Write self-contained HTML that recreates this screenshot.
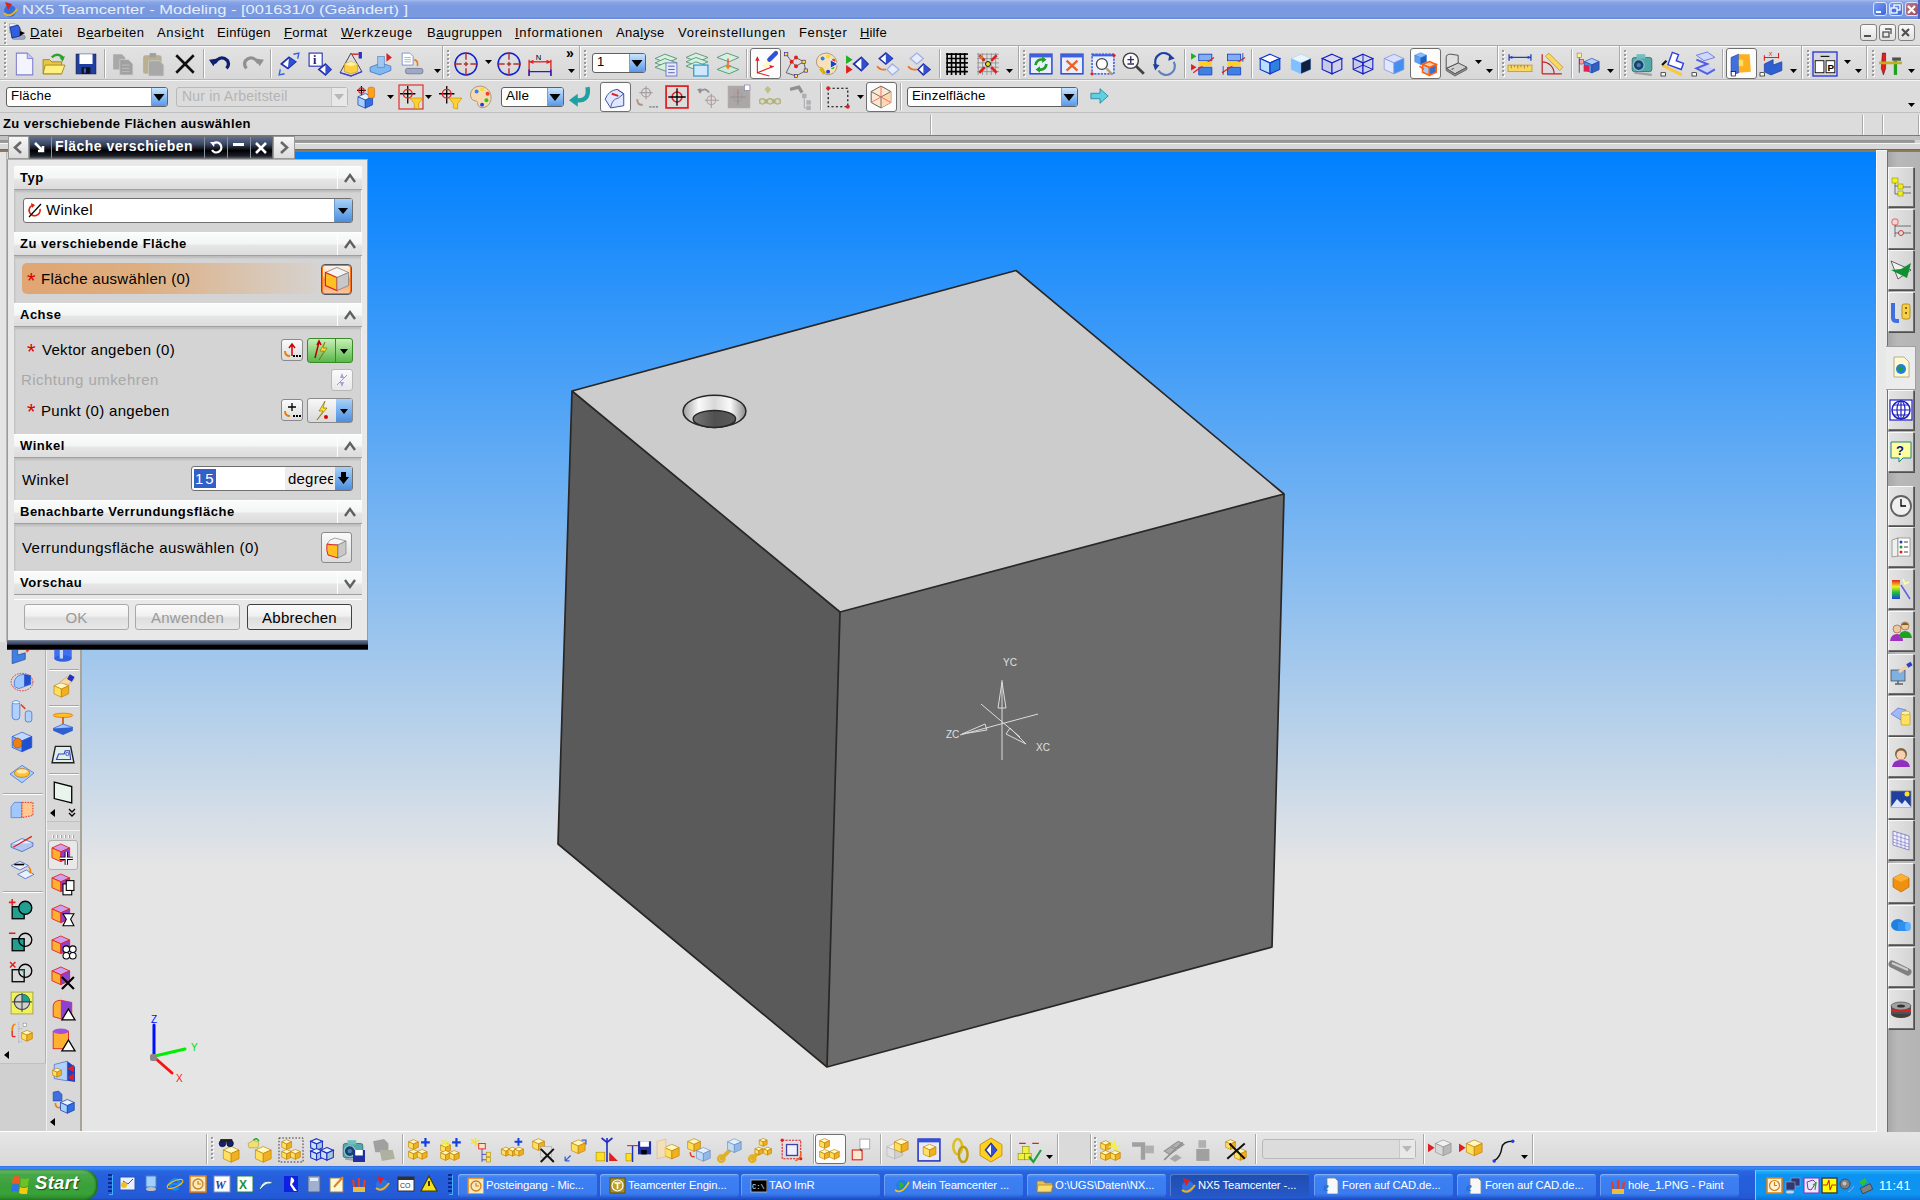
<!DOCTYPE html><html><head><meta charset="utf-8"><style>
*{box-sizing:border-box}
body{margin:0;width:1920px;height:1200px;position:relative;overflow:hidden;background:#dcdcdc;font-family:"Liberation Sans",sans-serif;font-size:13px;color:#000}
</style></head><body>
<div style="position:absolute;left:0px;top:0px;width:1920px;height:19px;background:linear-gradient(#a6bcee 0,#8aa6e6 2px,#7b9ae0 6px,#7898e0 14px,#7a9ce2 17px,#6a88d8 18px)"></div>
<div style="position:absolute;left:22px;top:2px;white-space:nowrap;font-size:13px;color:#e8eef8;transform:scaleX(1.27);transform-origin:0 0">NX5 Teamcenter - Modeling - [001631/0 (Geändert) ]</div>
<div style="position:absolute;left:0px;top:19px;width:1920px;height:27px;background:#dedede;border-top:1px solid #f4f2ea;border-bottom:1px solid #a8a8a8"></div>
<div style="position:absolute;left:30px;top:25px;white-space:nowrap;font-size:13px;color:#000;letter-spacing:0.53px"><u>D</u>atei</div>
<div style="position:absolute;left:77px;top:25px;white-space:nowrap;font-size:13px;color:#000;letter-spacing:0.46px">B<u>e</u>arbeiten</div>
<div style="position:absolute;left:157px;top:25px;white-space:nowrap;font-size:13px;color:#000;letter-spacing:0.69px">Ansi<u>c</u>ht</div>
<div style="position:absolute;left:217px;top:25px;white-space:nowrap;font-size:13px;color:#000;letter-spacing:0.31px">Einfügen</div>
<div style="position:absolute;left:284px;top:25px;white-space:nowrap;font-size:13px;color:#000;letter-spacing:0.41px"><u>F</u>ormat</div>
<div style="position:absolute;left:341px;top:25px;white-space:nowrap;font-size:13px;color:#000;letter-spacing:0.72px"><u>W</u>erkzeuge</div>
<div style="position:absolute;left:427px;top:25px;white-space:nowrap;font-size:13px;color:#000;letter-spacing:0.47px">B<u>a</u>ugruppen</div>
<div style="position:absolute;left:515px;top:25px;white-space:nowrap;font-size:13px;color:#000;letter-spacing:0.67px"><u>I</u>nformationen</div>
<div style="position:absolute;left:616px;top:25px;white-space:nowrap;font-size:13px;color:#000;letter-spacing:0.34px">Ana<u>l</u>yse</div>
<div style="position:absolute;left:678px;top:25px;white-space:nowrap;font-size:13px;color:#000;letter-spacing:0.74px">Voreinstellungen</div>
<div style="position:absolute;left:799px;top:25px;white-space:nowrap;font-size:13px;color:#000;letter-spacing:0.61px">Fens<u>t</u>er</div>
<div style="position:absolute;left:860px;top:25px;white-space:nowrap;font-size:13px;color:#000;letter-spacing:0.15px"><u>H</u>ilfe</div>
<div style="position:absolute;left:0px;top:46px;width:1920px;height:34px;background:linear-gradient(#e2e2e2,#d8d8d8);border-top:1px solid #fafafa;border-bottom:1px solid #b8b8b8"></div>
<div style="position:absolute;left:0px;top:80px;width:1920px;height:33px;background:#dcdcdc;border-top:1px solid #f4f4f4;border-bottom:1px solid #c0c0c0"></div>
<div style="position:absolute;left:0px;top:113px;width:1920px;height:22px;background:#dcdcdc"></div>
<div style="position:absolute;left:3px;top:116px;white-space:nowrap;font-size:13px;font-weight:bold;letter-spacing:0.43px">Zu verschiebende Flächen auswählen</div>
<div style="position:absolute;left:0px;top:135px;width:1920px;height:17px;background:linear-gradient(#7a7a7a 0,#7a7a7a 1px,#c2c2c2 1px,#c2c2c2 5px,#d4d4d4 5px,#d4d4d4 8px,#f4f4f4 8px,#f4f4f4 9px,#d8d8d8 9px,#d8d8d8 14px,#6a6a6a 14px,#6a6a6a 15px,#8a7a5a 15px,#8a7a5a 17px)"></div>
<div style="position:absolute;left:0px;top:140px;width:1915px;height:3px;background:linear-gradient(#909090,#a0a0a0);border-radius:0 2px 2px 0"></div>
<div style="position:absolute;left:82px;top:152px;width:1794px;height:979px;background:linear-gradient(#0080ff 0,#e5e5e5 716px,#e5e5e5 100%)"></div>
<div style="position:absolute;left:0px;top:152px;width:46px;height:979px;background:#d8d8d8;border-right:1px solid #b0b0b0"></div>
<div style="position:absolute;left:0px;top:152px;width:7px;height:490px;background:#e4e4e4;border-right:1px solid #b8b8b8"></div>
<div style="position:absolute;left:46px;top:152px;width:36px;height:979px;background:#d8d8d8;border-left:1px solid #f0f0f0;border-right:2px solid #a8a498"></div>
<div style="position:absolute;left:1876px;top:152px;width:10px;height:979px;background:#ebebeb;border-left:1px solid #c8c8c8"></div>
<div style="position:absolute;left:1886px;top:152px;width:34px;height:979px;background:#b4b4b4"></div>
<div style="position:absolute;left:0px;top:1131px;width:1920px;height:35px;background:linear-gradient(#e6e6e6,#d8d8d8);border-top:1px solid #fff"></div>
<div style="position:absolute;left:0px;top:1166px;width:1920px;height:34px;background:linear-gradient(#2a5ed8 0,#3c8cf4 1px,#3580f0 3px,#2a66e0 5px,#265fdc 10px,#245cda 26px,#2458d4 32px,#1c48b8 34px)"></div>
<div style="position:absolute;left:0px;top:1170px;width:98px;height:30px;background:linear-gradient(#6ab86a 0,#48a848 15%,#3aa03a 50%,#38a238 80%,#2a802a 100%);border-radius:0 14px 14px 0;box-shadow:inset -2px 0 2px #1e6a1e"></div>
<svg style="position:absolute;left:10px;top:1175px;" width="20" height="19" viewBox="0 0 20 19"><path d="M3 2 Q6 0 10 2 L9 9 Q6 7 2 9z" fill="#f05a20"/><path d="M11 3 Q15 5 19 3 L18 11 Q14 13 10 11z" fill="#70c020"/><path d="M2 10 Q5 8 9 10 L8 17 Q5 15 1 17z" fill="#3070f0"/><path d="M10 12 Q14 14 18 12 L17 19 Q13 20 9 18z" fill="#f8c810"/></svg>
<div style="position:absolute;left:35px;top:1172px;white-space:nowrap;font-size:18.5px;color:#fff;text-shadow:1px 1px 1px #1a4a1a;letter-spacing:0.3px"><i><b>Start</b></i></div>
<div style="position:absolute;left:5px;top:23px;width:2px;height:22px;background:repeating-linear-gradient(#fff 0,#fff 2px,transparent 2px,transparent 4px)"></div>
<div style="position:absolute;left:4px;top:22px;width:2px;height:22px;background:repeating-linear-gradient(#9a9a9a 0,#9a9a9a 2px,transparent 2px,transparent 4px)"></div>
<svg style="position:absolute;left:8px;top:23px;overflow:visible" width="18" height="18" viewBox="1 1 22 22"><path d="M3 2 L10 2 L13 5 L13 13 L3 13z" fill="#fff" stroke="#6080c0" stroke-width="0.7"/><path d="M5 6 H11 M5 8 H11 M5 10 H11" stroke="#8090b0" stroke-width="0.6"/><rect x="6" y="16" width="16" height="5" rx="2" fill="#a0a8c8" stroke="#606880" stroke-width="0.6"/><path d="M14 8 Q18 9 17 14" stroke="#e08020" stroke-width="1.5" fill="none"/></svg>
<svg style="position:absolute;left:8px;top:23px;" width="18" height="18" viewBox="0 0 18 18"><path d="M2 4 L10 2 L12 5 L12 13 L4 15z" fill="#3060e0" stroke="#102080" stroke-width="0.8"/><path d="M12 8 L17 10 L12 13z" fill="#000"/></svg>
<div style="position:absolute;left:1860px;top:24px;width:17px;height:17px;background:linear-gradient(#fafafa,#e0e0e0);border:1px solid #808080;border-radius:3px"></div>
<div style="position:absolute;left:1879px;top:24px;width:17px;height:17px;background:linear-gradient(#fafafa,#e0e0e0);border:1px solid #808080;border-radius:3px"></div>
<div style="position:absolute;left:1898px;top:24px;width:17px;height:17px;background:linear-gradient(#fafafa,#e0e0e0);border:1px solid #808080;border-radius:3px"></div>
<svg style="position:absolute;left:1860px;top:24px;" width="55" height="18" viewBox="0 0 55 18"><path d="M4 12 H11" stroke="#505050" stroke-width="2"/><path d="M25 5 H31 V10" stroke="#505050" stroke-width="1.3" fill="none"/><rect x="23" y="8" width="6" height="5" fill="none" stroke="#505050" stroke-width="1.3"/><path d="M42 5 L49 12 M49 5 L42 12" stroke="#505050" stroke-width="2.2"/></svg>
<svg style="position:absolute;left:2px;top:1px;" width="17" height="17" viewBox="0 0 17 17"><circle cx="8" cy="10" r="6" fill="#3070e0"/><path d="M2 12 Q8 18 15 8" stroke="#f0b020" stroke-width="2" fill="none"/><path d="M3 1 L10 3 L6 9z" fill="#e02020"/></svg>
<div style="position:absolute;left:1873px;top:2px;width:14px;height:14px;background:linear-gradient(135deg,#7a9cf0,#3a66e0);border:1px solid #d8e4fc;border-radius:3px"></div>
<div style="position:absolute;left:1889px;top:2px;width:14px;height:14px;background:linear-gradient(135deg,#7a9cf0,#3a66e0);border:1px solid #d8e4fc;border-radius:3px"></div>
<div style="position:absolute;left:1905px;top:2px;width:14px;height:14px;background:linear-gradient(135deg,#c07888,#985060);border:1px solid #d8e4fc;border-radius:3px"></div>
<svg style="position:absolute;left:1873px;top:2px;" width="48" height="14" viewBox="0 0 48 14"><rect x="3" y="9" width="5" height="2" fill="#fff"/><rect x="21" y="3" width="6" height="5" fill="none" stroke="#fff" stroke-width="1.3"/><rect x="18" y="6" width="6" height="5" fill="#4a70e0" stroke="#fff" stroke-width="1.3"/><path d="M35 4 L42 11 M42 4 L35 11" stroke="#fff" stroke-width="2.2"/></svg>
<div style="position:absolute;left:1918px;top:0px;width:2px;height:19px;background:#5060c8"></div>
<div style="position:absolute;left:5px;top:51px;width:2px;height:26px;background:repeating-linear-gradient(#fff 0,#fff 2px,transparent 2px,transparent 4px)"></div>
<div style="position:absolute;left:4px;top:50px;width:2px;height:26px;background:repeating-linear-gradient(#9a9a9a 0,#9a9a9a 2px,transparent 2px,transparent 4px)"></div>
<svg style="position:absolute;left:12px;top:52px;overflow:visible" width="24" height="24" viewBox="1 1 22 22"><path d="M5 2 L15 2 L20 7 L20 22 L5 22z" fill="#f4f4ff" stroke="#8080d0" stroke-width="1"/><path d="M15 2 L15 7 L20 7" fill="#c8c8f0" stroke="#8080d0" stroke-width="0.8"/></svg>
<svg style="position:absolute;left:42px;top:52px;overflow:visible" width="24" height="24" viewBox="1 1 22 22"><path d="M2 8 L8 8 L10 10 L19 10 L19 21 L2 21z" fill="#e8c840" stroke="#a08020" stroke-width="0.8"/><path d="M4 13 L22 13 L19 21 L2 21z" fill="#fff080" stroke="#a08020" stroke-width="0.8"/><path d="M10 6 Q15 1 20 6" stroke="#30a030" stroke-width="2.2" fill="none"/><path d="M17 6 L22 5 L20 10z" fill="#30a030"/></svg>
<svg style="position:absolute;left:74px;top:52px;overflow:visible" width="24" height="24" viewBox="1 1 22 22"><rect x="3" y="3" width="18" height="18" fill="#2040a0" stroke="#102060" stroke-width="0.8"/><rect x="6" y="3" width="12" height="9" fill="#fff"/><rect x="8" y="15" width="8" height="6" fill="#101020"/><rect x="10" y="16" width="2" height="4" fill="#4060c0"/></svg>
<div style="position:absolute;left:104px;top:49px;width:2px;height:29px;border-left:1px solid #a8a8a8;border-right:1px solid #fff"></div>
<svg style="position:absolute;left:111px;top:52px;overflow:visible" width="24" height="24" viewBox="1 1 22 22"><path d="M3 3 L11 3 L14 6 L14 17 L3 17z" fill="#a8a8a8"/><path d="M9 8 L17 8 L21 12 L21 22 L9 22z" fill="#a0a0a0" stroke="#d0d0d0" stroke-width="0.6"/><path d="M11 13 H18 M11 16 H18 M11 19 H18" stroke="#c0c0c0" stroke-width="0.8"/></svg>
<svg style="position:absolute;left:142px;top:52px;overflow:visible" width="24" height="24" viewBox="1 1 22 22"><rect x="2" y="4" width="17" height="17" rx="2" fill="#b8b090"/><rect x="8" y="2" width="6" height="4" fill="#a0a0a0"/><path d="M7 9 L17 9 L21 13 L21 23 L7 23z" fill="#a8a8a8" stroke="#d0d0d0" stroke-width="0.6"/></svg>
<svg style="position:absolute;left:173px;top:52px;overflow:visible" width="24" height="24" viewBox="1 1 22 22"><path d="M4 4 L20 20 M20 4 L4 20" stroke="#101010" stroke-width="2.4"/></svg>
<div style="position:absolute;left:203px;top:49px;width:2px;height:29px;border-left:1px solid #a8a8a8;border-right:1px solid #fff"></div>
<svg style="position:absolute;left:209px;top:52px;overflow:visible" width="24" height="24" viewBox="1 1 22 22"><path d="M6 11 Q12 3 18 9 Q20 13 17 16" stroke="#102070" stroke-width="3" fill="none"/><path d="M1 8 L9 7 L5 14z" fill="#102070"/></svg>
<svg style="position:absolute;left:240px;top:52px;overflow:visible" width="24" height="24" viewBox="1 1 22 22"><path d="M18 11 Q12 3 6 9 Q4 13 7 16" stroke="#909090" stroke-width="3" fill="none"/><path d="M23 8 L15 7 L19 14z" fill="#909090"/></svg>
<div style="position:absolute;left:270px;top:49px;width:2px;height:29px;border-left:1px solid #a8a8a8;border-right:1px solid #fff"></div>
<svg style="position:absolute;left:277px;top:52px;overflow:visible" width="24" height="24" viewBox="1 1 22 22"><path d="M5 12 L12 6 L18 10 L11 16z" fill="#fff" stroke="#2030b0" stroke-width="1.6"/><path d="M12 6 L18 10 L11 16z" fill="#3050d0"/><path d="M16 3 L21 2 L20 7 M4 17 L3 22 L8 21" stroke="#3060e0" stroke-width="1.3" fill="none"/></svg>
<svg style="position:absolute;left:308px;top:52px;overflow:visible" width="24" height="24" viewBox="1 1 22 22"><rect x="2" y="2" width="12" height="12" fill="#fff" stroke="#2030b0" stroke-width="1"/><text x="5.5" y="12" font-size="11" font-weight="bold" font-family="Liberation Serif" fill="#102080">i</text><path d="M11 17 L17 12 L22 17 L17 22z" fill="#fff" stroke="#2030b0" stroke-width="1.5"/><path d="M17 12 L22 17 L17 22z" fill="#3050d0"/></svg>
<svg style="position:absolute;left:339px;top:52px;overflow:visible" width="24" height="24" viewBox="1 1 22 22"><path d="M12 2 L2 20 L12 23 L22 19z" fill="none" stroke="#303030" stroke-width="0.8"/><path d="M6 12 L12 10 L18 12 L18 19 L12 21 L6 19z" fill="#ffd040" stroke="#c09020" stroke-width="0.6"/><path d="M6 12 L12 14 L18 12 L12 10z" fill="#fff0a0"/><path d="M2 20 L12 23 L22 19" stroke="#4040e0" stroke-width="1.2" fill="none"/><path d="M13 3 H19" stroke="#e02020" stroke-width="1.3"/><rect x="19" y="1" width="3" height="6" fill="#3030c0"/></svg>
<svg style="position:absolute;left:369px;top:52px;overflow:visible" width="24" height="24" viewBox="1 1 22 22"><path d="M2 15 L12 11 L21 14 L21 18 L11 22 L2 19z" fill="#80b8f0" stroke="#3060c0" stroke-width="0.6"/><rect x="9" y="5" width="6" height="10" fill="#a0c8f0" stroke="#5080c0" stroke-width="0.6"/><path d="M17 2 L22 6 L17 10z" fill="#e02020"/></svg>
<svg style="position:absolute;left:400px;top:52px;overflow:visible" width="24" height="24" viewBox="1 1 22 22"><path d="M3 2 L10 2 L13 5 L13 13 L3 13z" fill="#fff" stroke="#6080c0" stroke-width="0.7"/><path d="M5 6 H11 M5 8 H11 M5 10 H11" stroke="#8090b0" stroke-width="0.6"/><rect x="6" y="16" width="16" height="5" rx="2" fill="#a0a8c8" stroke="#606880" stroke-width="0.6"/><path d="M14 8 Q18 9 17 14" stroke="#e08020" stroke-width="1.5" fill="none"/></svg>
<svg style="position:absolute;left:434px;top:69px;" width="7" height="4" viewBox="0 0 7 4"><path d="M0 0 H7 L3.5 4z" fill="#000"/></svg>
<div style="position:absolute;left:442px;top:46px;width:2px;height:33px;border-left:1px solid #a8a8a8;border-right:1px solid #fff"></div>
<div style="position:absolute;left:448px;top:51px;width:2px;height:26px;background:repeating-linear-gradient(#fff 0,#fff 2px,transparent 2px,transparent 4px)"></div>
<div style="position:absolute;left:447px;top:50px;width:2px;height:26px;background:repeating-linear-gradient(#9a9a9a 0,#9a9a9a 2px,transparent 2px,transparent 4px)"></div>
<svg style="position:absolute;left:454px;top:52px;overflow:visible" width="24" height="24" viewBox="1 1 22 22"><circle cx="12" cy="12" r="10" fill="none" stroke="#1020d0" stroke-width="1.4"/><path d="M12 1 V8 M12 10 V14 M12 16 V23 M1 12 H8 M10 12 H14 M16 12 H23" stroke="#b03030" stroke-width="1.3"/></svg>
<svg style="position:absolute;left:485px;top:60px;" width="7" height="4" viewBox="0 0 7 4"><path d="M0 0 H7 L3.5 4z" fill="#000"/></svg>
<svg style="position:absolute;left:497px;top:52px;overflow:visible" width="24" height="24" viewBox="1 1 22 22"><circle cx="12" cy="12" r="10" fill="none" stroke="#1020d0" stroke-width="1.4"/><path d="M12 1 V8 M12 10 V14 M12 16 V23 M1 12 H8 M10 12 H14 M16 12 H23" stroke="#b03030" stroke-width="1.3"/></svg>
<svg style="position:absolute;left:528px;top:52px;overflow:visible" width="24" height="24" viewBox="1 1 22 22"><path d="M2 8 V23 M22 8 V23" stroke="#e02020" stroke-width="1.2"/><path d="M2 10 H22" stroke="#e02020" stroke-width="1.2"/><path d="M2 10 L6 8 L6 12z M22 10 L18 8 L18 12z" fill="#e02020"/><path d="M2 19 H22 M2 17 V23 M22 17 V23" stroke="#2020d0" stroke-width="1.3"/><text x="8" y="8" font-size="7" font-family="Liberation Sans" fill="#000">N</text></svg>
<div style="position:absolute;left:566px;top:45px;white-space:nowrap;font-size:14px;font-weight:bold">»</div>
<svg style="position:absolute;left:568px;top:69px;" width="7" height="4" viewBox="0 0 7 4"><path d="M0 0 H7 L3.5 4z" fill="#000"/></svg>
<div style="position:absolute;left:579px;top:46px;width:2px;height:33px;border-left:1px solid #a8a8a8;border-right:1px solid #fff"></div>
<div style="position:absolute;left:585px;top:51px;width:2px;height:26px;background:repeating-linear-gradient(#fff 0,#fff 2px,transparent 2px,transparent 4px)"></div>
<div style="position:absolute;left:584px;top:50px;width:2px;height:26px;background:repeating-linear-gradient(#9a9a9a 0,#9a9a9a 2px,transparent 2px,transparent 4px)"></div>
<div style="position:absolute;left:592px;top:53px;width:54px;height:20px;background:#fff;border:1px solid #606060;border-radius:3px"></div>
<div style="position:absolute;left:629px;top:54px;width:16px;height:18px;background:linear-gradient(#c8e4ff,#5898e8);border-left:1px solid #7aa0d0;border-radius:0 2px 2px 0"></div>
<svg style="position:absolute;left:629px;top:54px;" width="16" height="18" viewBox="0 0 16 18"><path d="M2.5 6.0 H13.5 L8 13.0z" fill="#000"/></svg>
<div style="position:absolute;left:597px;top:54px;white-space:nowrap;font-size:13px;color:#000;letter-spacing:0.15px">1</div>
<svg style="position:absolute;left:654px;top:52px;overflow:visible" width="24" height="24" viewBox="1 1 22 22"><path d="M2 7 L11 3 L22 7 L13 11z" fill="#d8f0e0" stroke="#509070" stroke-width="0.8"/><path d="M2 11 L11 7 L22 11 L13 15z" fill="#d8f0e0" stroke="#509070" stroke-width="0.8"/><path d="M2 15 L11 11 L22 15 L13 19z" fill="#d8f0e0" stroke="#509070" stroke-width="0.8"/><rect x="12" y="11" width="10" height="12" fill="#e8eaff" stroke="#6070c0" stroke-width="0.8"/><path d="M14 14 H20 M14 17 H20 M14 20 H20" stroke="#4050b0" stroke-width="0.8"/></svg>
<svg style="position:absolute;left:685px;top:52px;overflow:visible" width="24" height="24" viewBox="1 1 22 22"><path d="M2 6 L11 2 L22 6 L13 10z" fill="#d8f0e0" stroke="#509070" stroke-width="0.8"/><path d="M2 10 L11 6 L22 10 L13 14z" fill="#d8f0e0" stroke="#509070" stroke-width="0.8"/><path d="M2 14 L11 10 L22 14 L13 18z" fill="#d8f0e0" stroke="#509070" stroke-width="0.8"/><rect x="9" y="13" width="13" height="10" fill="#d0e8ff" stroke="#30a0d0" stroke-width="1.2"/></svg>
<svg style="position:absolute;left:716px;top:52px;overflow:visible" width="24" height="24" viewBox="1 1 22 22"><path d="M2 6 L11 2 L22 6 L13 10z" fill="#d8f0e0" stroke="#509070" stroke-width="0.8"/><path d="M2 17 L11 13 L22 17 L13 21z" fill="#c8ecd8" stroke="#509070" stroke-width="0.8"/><path d="M12 7 V15" stroke="#e06020" stroke-width="1.4"/><path d="M9 13 L12 17 L15 13z" fill="#f08020"/></svg>
<div style="position:absolute;left:746px;top:49px;width:2px;height:29px;border-left:1px solid #a8a8a8;border-right:1px solid #fff"></div>
<div style="position:absolute;left:750px;top:48px;width:31px;height:31px;background:#fcfcfc;border:1px solid #707070;border-radius:3px"></div>
<svg style="position:absolute;left:753px;top:52px;overflow:visible" width="24" height="24" viewBox="1 1 22 22"><path d="M5 6 V20 L20 14 M5 20 L16 23" stroke="#e02020" stroke-width="1" fill="none"/><path d="M5 5 L3 9 H7z M20 14 L16 13 L17 16z" fill="#e02020"/><path d="M11 15 L19 6" stroke="#fffbc0" stroke-width="4"/><path d="M16 8 L22 2" stroke="#3050e0" stroke-width="4" stroke-linecap="round"/></svg>
<svg style="position:absolute;left:784px;top:52px;overflow:visible" width="24" height="24" viewBox="1 1 22 22"><path d="M3 3 L8 10 L3 20 L12 23 L21 18 L19 10 L12 6 L8 10 L12 14 L19 10" stroke="#404040" stroke-width="0.7" fill="none"/><rect x="1.5" y="1.5" width="3" height="3" fill="#ffe020" stroke="#4020a0" stroke-width="0.6"/><rect x="19.5" y="16.5" width="3" height="3" fill="#ffe020" stroke="#4020a0" stroke-width="0.6"/><rect x="10.5" y="21.5" width="3" height="3" fill="#ffe020" stroke="#4020a0" stroke-width="0.6"/><rect x="17.5" y="8.5" width="3" height="3" fill="#ffe020" stroke="#4020a0" stroke-width="0.6"/><circle cx="8" cy="10" r="1.8" fill="#e02020"/><circle cx="12" cy="14" r="1.8" fill="#e02020"/><circle cx="12" cy="6" r="1.8" fill="#e02020"/></svg>
<svg style="position:absolute;left:815px;top:52px;overflow:visible" width="24" height="24" viewBox="1 1 22 22"><path d="M12 2 C4 2 1 8 3 13 C5 17 9 14 9 18 C9 22 14 23 18 20 C23 16 23 4 12 2z" fill="#f8e0b8" stroke="#a08060" stroke-width="0.7"/><circle cx="8" cy="7" r="1.8" fill="#3080f0"/><circle cx="13" cy="5" r="1.8" fill="#f0e020"/><circle cx="18" cy="9" r="1.8" fill="#f04020"/><circle cx="17" cy="15" r="1.8" fill="#30c030"/><circle cx="13" cy="19" r="1.8" fill="#2040e0"/><path d="M15 8 L22 12 L15 16z" fill="#2040c0" stroke="#fff" stroke-width="0.8"/><path d="M6 16 L10 21" stroke="#e0b000" stroke-width="3"/></svg>
<svg style="position:absolute;left:845px;top:52px;overflow:visible" width="24" height="24" viewBox="1 1 22 22"><path d="M2 4 L8 8 L2 12z" fill="#20b020"/><path d="M2 13 L8 17 L2 21z" fill="#e02020"/><path d="M9 12 L16 6 L22 12 L16 18z" fill="#fff" stroke="#2030b0" stroke-width="1.6"/><path d="M16 6 L22 12 L16 18z" fill="#3050d0"/></svg>
<svg style="position:absolute;left:876px;top:52px;overflow:visible" width="24" height="24" viewBox="1 1 22 22"><path d="M4 7 L10 2 L16 7 L10 12z" fill="#fff" stroke="#2030b0" stroke-width="1.4"/><path d="M10 2 L16 7 L10 12z" fill="#3050d0"/><path d="M11 17 L16 12 L22 17 L16 22z" fill="#e8ecff" stroke="#a0b0e0" stroke-width="1.2"/><path d="M2 14 Q5 18 10 17" stroke="#f07020" stroke-width="1.6" fill="none"/></svg>
<svg style="position:absolute;left:907px;top:52px;overflow:visible" width="24" height="24" viewBox="1 1 22 22"><path d="M4 7 L10 2 L16 7 L10 12z" fill="#e8ecff" stroke="#a0b0e0" stroke-width="1.2"/><path d="M11 17 L16 12 L22 17 L16 22z" fill="#fff" stroke="#2030b0" stroke-width="1.4"/><path d="M16 12 L22 17 L16 22z" fill="#3050d0"/><path d="M2 14 Q5 18 10 17" stroke="#f07020" stroke-width="1.6" fill="none"/></svg>
<div style="position:absolute;left:939px;top:49px;width:2px;height:29px;border-left:1px solid #a8a8a8;border-right:1px solid #fff"></div>
<svg style="position:absolute;left:945px;top:52px;overflow:visible" width="24" height="24" viewBox="1 1 22 22"><path d="M3 2 V22 M7 2 V22 M11 2 V22 M15 2 V22 M19 2 V22 M2 3 H22 M2 7 H22 M2 11 H22 M2 15 H22 M2 19 H22 " stroke="#000" stroke-width="1.5"/></svg>
<svg style="position:absolute;left:976px;top:52px;overflow:visible" width="24" height="24" viewBox="1 1 22 22"><path d="M3 2 V22 M7 2 V22 M11 2 V22 M15 2 V22 M19 2 V22 M2 3 H22 M2 7 H22 M2 11 H22 M2 15 H22 M2 19 H22 " stroke="#909090" stroke-width="0.8"/><path d="M4 4 L9 9 M20 4 L15 9 M4 20 L9 15 M20 20 L15 15" stroke="#e02020" stroke-width="2.4"/><path d="M4 4 L8 6 L6 8z" fill="#f08020"/><circle cx="12" cy="12" r="2.3" fill="#e0e020" stroke="#000" stroke-width="0.8"/></svg>
<svg style="position:absolute;left:1006px;top:69px;" width="7" height="4" viewBox="0 0 7 4"><path d="M0 0 H7 L3.5 4z" fill="#000"/></svg>
<div style="position:absolute;left:1018px;top:46px;width:2px;height:33px;border-left:1px solid #a8a8a8;border-right:1px solid #fff"></div>
<div style="position:absolute;left:1024px;top:51px;width:2px;height:26px;background:repeating-linear-gradient(#fff 0,#fff 2px,transparent 2px,transparent 4px)"></div>
<div style="position:absolute;left:1023px;top:50px;width:2px;height:26px;background:repeating-linear-gradient(#9a9a9a 0,#9a9a9a 2px,transparent 2px,transparent 4px)"></div>
<svg style="position:absolute;left:1029px;top:52px;overflow:visible" width="24" height="24" viewBox="1 1 22 22"><rect x="2" y="3" width="20" height="18" fill="#e8f0ff" stroke="#2040d0" stroke-width="1.3"/><rect x="2" y="3" width="20" height="3" fill="#4060e0"/><path d="M7 13 Q8 7 14 8" stroke="#20a020" stroke-width="2.4" fill="none"/><path d="M17 12 Q16 18 10 17" stroke="#20a020" stroke-width="2.4" fill="none"/><path d="M13 5 L17 8 L13 11z M11 14 L7 17 L11 20z" fill="#20a020"/></svg>
<svg style="position:absolute;left:1060px;top:52px;overflow:visible" width="24" height="24" viewBox="1 1 22 22"><rect x="2" y="3" width="20" height="18" fill="#e8f0ff" stroke="#2040d0" stroke-width="1.3"/><rect x="2" y="3" width="20" height="3" fill="#4060e0"/><path d="M7 9 L17 18 M17 9 L7 18" stroke="#f06020" stroke-width="2.2"/></svg>
<svg style="position:absolute;left:1091px;top:52px;overflow:visible" width="24" height="24" viewBox="1 1 22 22"><rect x="2" y="3" width="20" height="18" fill="#e8f0ff" stroke="#2040d0" stroke-width="1.2" stroke-dasharray="2,1"/><rect x="2" y="3" width="20" height="2" fill="#4060e0"/><circle cx="11" cy="12" r="5" fill="#fff" stroke="#404040" stroke-width="1.2"/><path d="M15 16 L20 21" stroke="#c0a060" stroke-width="2.2"/><circle cx="22" cy="4" r="1.5" fill="#e02020"/><circle cx="2" cy="21" r="1.5" fill="#e02020"/></svg>
<svg style="position:absolute;left:1122px;top:52px;overflow:visible" width="24" height="24" viewBox="1 1 22 22"><circle cx="9" cy="9" r="7" fill="#fafafa" stroke="#404040" stroke-width="1.3"/><path d="M9 5 V11 M6 8 H12 M6 12 H12" stroke="#303060" stroke-width="1.3"/><path d="M14 14 L21 21" stroke="#404040" stroke-width="2.5"/></svg>
<svg style="position:absolute;left:1153px;top:52px;overflow:visible" width="24" height="24" viewBox="1 1 22 22"><path d="M4 14 A8 8 0 0 1 18 6" stroke="#2040a0" stroke-width="2" fill="none"/><path d="M20 10 A8 8 0 0 1 6 18" stroke="#6080c0" stroke-width="2" fill="none"/><path d="M16 3 L21 7 L15 9z M1 12 L7 13 L3 18z" fill="#2040a0"/></svg>
<div style="position:absolute;left:1184px;top:49px;width:2px;height:29px;border-left:1px solid #a8a8a8;border-right:1px solid #fff"></div>
<svg style="position:absolute;left:1190px;top:52px;overflow:visible" width="24" height="24" viewBox="1 1 22 22"><path d="M2 2 L7 5 L2 8z" fill="#20b020"/><path d="M2 12 L7 15 L2 18z" fill="#e02020"/><rect x="9" y="3" width="12" height="6" fill="#80b0f0" stroke="#2040c0" stroke-width="0.8"/><path d="M9 15 L21 15 L21 22 L9 22z" fill="#4080e0" stroke="#2040c0" stroke-width="0.8"/><path d="M4 20 L23 6" stroke="#e02020" stroke-width="1.2"/><rect x="9" y="10" width="12" height="4" fill="#ffd020"/></svg>
<svg style="position:absolute;left:1221px;top:52px;overflow:visible" width="24" height="24" viewBox="1 1 22 22"><rect x="7" y="3" width="12" height="6" fill="#80b0f0" stroke="#2040c0" stroke-width="0.8"/><path d="M7 15 L19 15 L19 22 L7 22z" fill="#4080e0" stroke="#2040c0" stroke-width="0.8"/><path d="M2 20 L23 6" stroke="#e02020" stroke-width="1.2"/><rect x="7" y="10" width="12" height="4" fill="#ffd020"/><path d="M3 14 V22 M21 2 V10" stroke="#2040c0" stroke-width="0.8"/></svg>
<div style="position:absolute;left:1251px;top:49px;width:2px;height:29px;border-left:1px solid #a8a8a8;border-right:1px solid #fff"></div>
<svg style="position:absolute;left:1258px;top:52px;overflow:visible" width="24" height="24" viewBox="1 1 22 22"><polygon points="12.0,3.0 21.0,7.0 12.0,11.0 3.0,7.0" fill="#ffffff" stroke="#1030d0" stroke-width="1.0"/><polygon points="3.0,7.0 12.0,11.0 12.0,21.0 3.0,17.0" fill="#b8e0ff" stroke="#1030d0" stroke-width="1.0"/><polygon points="12.0,11.0 21.0,7.0 21.0,17.0 12.0,21.0" fill="#3080e0" stroke="#1030d0" stroke-width="1.0"/></svg>
<svg style="position:absolute;left:1289px;top:52px;overflow:visible" width="24" height="24" viewBox="1 1 22 22"><polygon points="12.0,3.0 21.0,7.0 12.0,11.0 3.0,7.0" fill="#e8f4ff" stroke="#80c0ff" stroke-width="0.3"/><polygon points="3.0,7.0 12.0,11.0 12.0,21.0 3.0,17.0" fill="#80c0ff" stroke="#80c0ff" stroke-width="0.3"/><polygon points="12.0,11.0 21.0,7.0 21.0,17.0 12.0,21.0" fill="#102040" stroke="#80c0ff" stroke-width="0.3"/></svg>
<svg style="position:absolute;left:1320px;top:52px;overflow:visible" width="24" height="24" viewBox="1 1 22 22"><polygon points="12.0,3.0 21.0,7.0 12.0,11.0 3.0,7.0" fill="#d8d8f0" stroke="#1020c0" stroke-width="1.0"/><polygon points="3.0,7.0 12.0,11.0 12.0,21.0 3.0,17.0" fill="#c8c8e8" stroke="#1020c0" stroke-width="1.0"/><polygon points="12.0,11.0 21.0,7.0 21.0,17.0 12.0,21.0" fill="#d0d0ec" stroke="#1020c0" stroke-width="1.0"/></svg>
<svg style="position:absolute;left:1351px;top:52px;overflow:visible" width="24" height="24" viewBox="1 1 22 22"><polygon points="12.0,3.0 21.0,7.0 12.0,11.0 3.0,7.0" fill="#d8d8f0" stroke="#1020c0" stroke-width="1.0"/><polygon points="3.0,7.0 12.0,11.0 12.0,21.0 3.0,17.0" fill="#c8c8e8" stroke="#1020c0" stroke-width="1.0"/><polygon points="12.0,11.0 21.0,7.0 21.0,17.0 12.0,21.0" fill="#d0d0ec" stroke="#1020c0" stroke-width="1.0"/><path d="M3 17 L12 13 L21 17 M12 3 V13" stroke="#1020c0" stroke-width="0.9" fill="none"/></svg>
<svg style="position:absolute;left:1382px;top:52px;overflow:visible" width="24" height="24" viewBox="1 1 22 22"><polygon points="12.0,3.0 21.0,7.0 12.0,11.0 3.0,7.0" fill="#d8e0ff" stroke="#8090e0" stroke-width="0.7"/><polygon points="3.0,7.0 12.0,11.0 12.0,21.0 3.0,17.0" fill="#e0e8ff" stroke="#8090e0" stroke-width="0.7"/><polygon points="12.0,11.0 21.0,7.0 21.0,17.0 12.0,21.0" fill="#4090f0" stroke="#8090e0" stroke-width="0.7"/></svg>
<div style="position:absolute;left:1410px;top:48px;width:31px;height:31px;background:#fcfcfc;border:1px solid #707070;border-radius:3px"></div>
<svg style="position:absolute;left:1413px;top:52px;overflow:visible" width="24" height="24" viewBox="1 1 22 22"><polygon points="8.0,1.6 13.4,4.0 8.0,6.4 2.6,4.0" fill="#80c0ff" stroke="#3070d0" stroke-width="0.4"/><polygon points="2.6,4.0 8.0,6.4 8.0,12.4 2.6,10.0" fill="#60a0f0" stroke="#3070d0" stroke-width="0.4"/><polygon points="8.0,6.4 13.4,4.0 13.4,10.0 8.0,12.4" fill="#2060c0" stroke="#3070d0" stroke-width="0.4"/><polygon points="16.0,9.7 22.3,12.5 16.0,15.3 9.7,12.5" fill="#ffd0a0" stroke="#ff6010" stroke-width="1.4"/><polygon points="9.7,12.5 16.0,15.3 16.0,22.3 9.7,19.5" fill="#a0d0ff" stroke="#ff6010" stroke-width="1.4"/><polygon points="16.0,15.3 22.3,12.5 22.3,19.5 16.0,22.3" fill="#3070e0" stroke="#ff6010" stroke-width="1.4"/><path d="M7 14 L11 17" stroke="#f06020" stroke-width="1.5"/></svg>
<svg style="position:absolute;left:1444px;top:52px;overflow:visible" width="24" height="24" viewBox="1 1 22 22"><path d="M3 16 L14 11 L22 15 L11 21z" fill="#d0d0d0" stroke="#505050" stroke-width="0.9"/><path d="M3 16 L3 18 L11 23 L22 17 L22 15 L11 21z" fill="#909090" stroke="#505050" stroke-width="0.7"/><path d="M3 16 L3 6 Q3 3 7 3 L14 4 L14 11z" fill="#e0e0e0" stroke="#505050" stroke-width="0.9"/><path d="M8 17 L10 16" stroke="#505050" stroke-width="1"/></svg>
<svg style="position:absolute;left:1475px;top:60px;" width="7" height="4" viewBox="0 0 7 4"><path d="M0 0 H7 L3.5 4z" fill="#000"/></svg>
<svg style="position:absolute;left:1486px;top:69px;" width="7" height="4" viewBox="0 0 7 4"><path d="M0 0 H7 L3.5 4z" fill="#000"/></svg>
<div style="position:absolute;left:1497px;top:46px;width:2px;height:33px;border-left:1px solid #a8a8a8;border-right:1px solid #fff"></div>
<div style="position:absolute;left:1503px;top:51px;width:2px;height:26px;background:repeating-linear-gradient(#fff 0,#fff 2px,transparent 2px,transparent 4px)"></div>
<div style="position:absolute;left:1502px;top:50px;width:2px;height:26px;background:repeating-linear-gradient(#9a9a9a 0,#9a9a9a 2px,transparent 2px,transparent 4px)"></div>
<svg style="position:absolute;left:1508px;top:52px;overflow:visible" width="24" height="24" viewBox="1 1 22 22"><path d="M2 6 H22 M2 3 V9 M22 3 V9" stroke="#2040c0" stroke-width="1.2"/><path d="M2 6 L5 4.5 L5 7.5z M22 6 L19 4.5 L19 7.5z" fill="#2040c0"/><rect x="1" y="13" width="22" height="6" fill="#f8d860" stroke="#c09020" stroke-width="0.7"/><path d="M4 13 V16 M7 13 V15 M10 13 V16 M13 13 V15 M16 13 V16 M19 13 V15" stroke="#806020" stroke-width="0.6"/></svg>
<svg style="position:absolute;left:1540px;top:52px;overflow:visible" width="24" height="24" viewBox="1 1 22 22"><path d="M3 21 L3 3 M3 21 L21 21 M3 10 A11 11 0 0 1 14 21" stroke="#c02020" stroke-width="1.1" fill="none"/><path d="M9 2 L22 15 L19 18 L6 5z" fill="#f8d860" stroke="#c09020" stroke-width="0.7"/></svg>
<div style="position:absolute;left:1571px;top:49px;width:2px;height:29px;border-left:1px solid #a8a8a8;border-right:1px solid #fff"></div>
<svg style="position:absolute;left:1576px;top:52px;overflow:visible" width="24" height="24" viewBox="1 1 22 22"><rect x="2" y="2" width="4" height="4" fill="#fff0a0" stroke="#808020" stroke-width="0.5"/><rect x="4" y="8" width="4" height="4" fill="#ffa0a0" stroke="#802020" stroke-width="0.5"/><path d="M4 6 V20" stroke="#4040a0" stroke-width="0.8"/><polygon points="15.5,6.8 22.2,9.8 15.5,12.8 8.8,9.8" fill="#b0d0ff" stroke="#2040a0" stroke-width="0.6"/><polygon points="8.8,9.8 15.5,12.8 15.5,20.2 8.8,17.2" fill="#5090e0" stroke="#2040a0" stroke-width="0.6"/><polygon points="15.5,12.8 22.2,9.8 22.2,17.2 15.5,20.2" fill="#3060c0" stroke="#2040a0" stroke-width="0.6"/><rect x="8" y="13" width="5" height="6" fill="#e02050"/></svg>
<svg style="position:absolute;left:1607px;top:69px;" width="7" height="4" viewBox="0 0 7 4"><path d="M0 0 H7 L3.5 4z" fill="#000"/></svg>
<div style="position:absolute;left:1619px;top:46px;width:2px;height:33px;border-left:1px solid #a8a8a8;border-right:1px solid #fff"></div>
<div style="position:absolute;left:1625px;top:51px;width:2px;height:26px;background:repeating-linear-gradient(#fff 0,#fff 2px,transparent 2px,transparent 4px)"></div>
<div style="position:absolute;left:1624px;top:50px;width:2px;height:26px;background:repeating-linear-gradient(#9a9a9a 0,#9a9a9a 2px,transparent 2px,transparent 4px)"></div>
<svg style="position:absolute;left:1630px;top:52px;overflow:visible" width="24" height="24" viewBox="1 1 22 22"><rect x="3" y="6" width="18" height="13" rx="2" fill="#50a8a8" stroke="#306060" stroke-width="0.7"/><rect x="7" y="3" width="8" height="4" fill="#70c0c0"/><circle cx="9" cy="13" r="5" fill="#204060" stroke="#80c0e0" stroke-width="1.2"/><circle cx="9" cy="13" r="2" fill="#4080c0"/><path d="M5 20 L21 22" stroke="#a0a0a0" stroke-width="2"/></svg>
<svg style="position:absolute;left:1661px;top:52px;overflow:visible" width="24" height="24" viewBox="1 1 22 22"><path d="M9 3 L15 3 L15 9 L22 9 L22 15 L9 15z" fill="#fff" stroke="#3040e0" stroke-width="1.3" transform="rotate(20 15 9)"/><path d="M2 13 L20 22" stroke="#f8c840" stroke-width="3"/><path d="M2 13 L6 9" stroke="#101010" stroke-width="2"/><rect x="1" y="20" width="4" height="3" fill="#fff" stroke="#000" stroke-width="0.6"/></svg>
<svg style="position:absolute;left:1692px;top:52px;overflow:visible" width="24" height="24" viewBox="1 1 22 22"><path d="M5 4 L15 1 L22 6 L12 9z" fill="#d0d8ff" stroke="#6070e0" stroke-width="0.8"/><path d="M5 8 L15 12 L5 16 L15 21 L22 17" stroke="#5060e0" stroke-width="1.8" fill="#c8d0ff"/><rect x="1" y="20" width="4" height="3" fill="#fff" stroke="#000" stroke-width="0.6"/></svg>
<div style="position:absolute;left:1722px;top:49px;width:2px;height:29px;border-left:1px solid #a8a8a8;border-right:1px solid #fff"></div>
<div style="position:absolute;left:1726px;top:48px;width:31px;height:31px;background:#fcfcfc;border:1px solid #707070;border-radius:3px"></div>
<svg style="position:absolute;left:1729px;top:52px;overflow:visible" width="24" height="24" viewBox="1 1 22 22"><path d="M3 6 L10 3 L10 20 L3 22z" fill="#4070e0" stroke="#2040a0" stroke-width="0.7"/><path d="M10 3 L20 3 L21 19 L10 20z" fill="#ffb020"/><path d="M10 8 L14 8 L14 14 L10 14z" fill="#ffe060"/><rect x="3" y="19" width="4" height="4" fill="#fff" stroke="#000" stroke-width="0.6"/></svg>
<svg style="position:absolute;left:1760px;top:52px;overflow:visible" width="24" height="24" viewBox="1 1 22 22"><path d="M5 12 L13 8 L13 13 L21 10 L21 18 L11 22 L5 19z" fill="#3060d0" stroke="#2040a0" stroke-width="0.7"/><path d="M5 4 V9 M18 2 V7 M5 6 H18" stroke="#e02020" stroke-width="1"/><text x="9" y="5" font-size="5" fill="#e02020">X</text><rect x="1" y="20" width="4" height="3" fill="#fff" stroke="#000" stroke-width="0.6"/></svg>
<svg style="position:absolute;left:1790px;top:69px;" width="7" height="4" viewBox="0 0 7 4"><path d="M0 0 H7 L3.5 4z" fill="#000"/></svg>
<div style="position:absolute;left:1801px;top:46px;width:2px;height:33px;border-left:1px solid #a8a8a8;border-right:1px solid #fff"></div>
<div style="position:absolute;left:1808px;top:51px;width:2px;height:26px;background:repeating-linear-gradient(#fff 0,#fff 2px,transparent 2px,transparent 4px)"></div>
<div style="position:absolute;left:1807px;top:50px;width:2px;height:26px;background:repeating-linear-gradient(#9a9a9a 0,#9a9a9a 2px,transparent 2px,transparent 4px)"></div>
<svg style="position:absolute;left:1813px;top:52px;overflow:visible" width="24" height="24" viewBox="1 1 22 22"><rect x="1" y="1" width="22" height="22" fill="#d8d8d8" stroke="#2030e0" stroke-width="1.2"/><rect x="3" y="9" width="8" height="11" fill="#fff" stroke="#000" stroke-width="0.8"/><rect x="13" y="9" width="8" height="11" fill="#fff" stroke="#000" stroke-width="0.8"/><text x="14.2" y="18.5" font-size="9" font-weight="bold" font-family="Liberation Sans">P</text><path d="M8 5 H16" stroke="#000" stroke-width="1"/></svg>
<svg style="position:absolute;left:1844px;top:60px;" width="7" height="4" viewBox="0 0 7 4"><path d="M0 0 H7 L3.5 4z" fill="#000"/></svg>
<svg style="position:absolute;left:1855px;top:69px;" width="7" height="4" viewBox="0 0 7 4"><path d="M0 0 H7 L3.5 4z" fill="#000"/></svg>
<div style="position:absolute;left:1866px;top:46px;width:2px;height:33px;border-left:1px solid #a8a8a8;border-right:1px solid #fff"></div>
<div style="position:absolute;left:1873px;top:51px;width:2px;height:26px;background:repeating-linear-gradient(#fff 0,#fff 2px,transparent 2px,transparent 4px)"></div>
<div style="position:absolute;left:1872px;top:50px;width:2px;height:26px;background:repeating-linear-gradient(#9a9a9a 0,#9a9a9a 2px,transparent 2px,transparent 4px)"></div>
<svg style="position:absolute;left:1878px;top:52px;overflow:visible" width="24" height="24" viewBox="1 1 22 22"><path d="M5 2 L8 2 L8 16 L6 22 L4 16z" fill="#e02020" stroke="#600000" stroke-width="0.5"/><path d="M14 6 L22 6 L22 9 L14 9z" fill="#505050"/><path d="M17 9 V22" stroke="#20a020" stroke-width="3"/><path d="M2 11 H23" stroke="#c0b020" stroke-width="2.5"/></svg>
<svg style="position:absolute;left:1908px;top:69px;" width="7" height="4" viewBox="0 0 7 4"><path d="M0 0 H7 L3.5 4z" fill="#000"/></svg>
<div style="position:absolute;left:6px;top:87px;width:162px;height:20px;background:#fff;border:1px solid #606060;border-radius:3px"></div>
<div style="position:absolute;left:151px;top:88px;width:16px;height:18px;background:linear-gradient(#c8e4ff,#5898e8);border-left:1px solid #7aa0d0;border-radius:0 2px 2px 0"></div>
<svg style="position:absolute;left:151px;top:88px;" width="16" height="18" viewBox="0 0 16 18"><path d="M2.5 6.0 H13.5 L8 13.0z" fill="#000"/></svg>
<div style="position:absolute;left:11px;top:88px;white-space:nowrap;font-size:13.2px;color:#000;letter-spacing:0.15px">Fläche</div>
<div style="position:absolute;left:176px;top:87px;width:172px;height:20px;background:#dcdcdc;border:1px solid #b8b8b8;border-radius:3px"></div>
<div style="position:absolute;left:331px;top:88px;width:16px;height:18px;background:#e8e8e8;border-left:1px solid #c8c8c8"></div>
<svg style="position:absolute;left:331px;top:88px;" width="16" height="18" viewBox="0 0 16 18"><path d="M3 6.0 H13 L8 12.0z" fill="#b8b8b8"/></svg>
<div style="position:absolute;left:182px;top:88px;white-space:nowrap;font-size:14px;color:#b4b4b4;letter-spacing:0.2px">Nur in Arbeitsteil</div>
<svg style="position:absolute;left:356px;top:85px;overflow:visible" width="24" height="24" viewBox="1 1 22 22"><polygon points="9.5,8.8 16.2,11.8 9.5,14.8 2.8,11.8" fill="#e8f4ff" stroke="#2040b0" stroke-width="0.7"/><polygon points="2.8,11.8 9.5,14.8 9.5,22.2 2.8,19.2" fill="#a8d0ff" stroke="#2040b0" stroke-width="0.7"/><polygon points="9.5,14.8 16.2,11.8 16.2,19.2 9.5,22.2" fill="#3070e0" stroke="#2040b0" stroke-width="0.7"/><rect x="12" y="3" width="6" height="10" rx="2" fill="#ffa020" stroke="#c06000" stroke-width="0.5"/><path d="M2 6 H10 M6 2 V10" stroke="#000" stroke-width="1.1"/><circle cx="6" cy="6" r="2.5" fill="none" stroke="#e02020" stroke-width="1"/></svg>
<svg style="position:absolute;left:387px;top:95px;" width="7" height="4" viewBox="0 0 7 4"><path d="M0 0 H7 L3.5 4z" fill="#000"/></svg>
<svg style="position:absolute;left:399px;top:85px;overflow:visible" width="24" height="24" viewBox="1 1 22 22"><rect x="1" y="1" width="22" height="22" fill="none" stroke="#e02020" stroke-width="1"/><path d="M2 9 H16 M9 2 V18" stroke="#000" stroke-width="1.2"/><circle cx="9" cy="9" r="4" fill="none" stroke="#e02020" stroke-width="1.3"/><path d="M11 13 L23 13 L19 18 L19 23 L15 22 L15 18z" fill="#ffd030" stroke="#c09000" stroke-width="0.6"/></svg>
<svg style="position:absolute;left:425px;top:95px;" width="7" height="4" viewBox="0 0 7 4"><path d="M0 0 H7 L3.5 4z" fill="#000"/></svg>
<svg style="position:absolute;left:438px;top:85px;overflow:visible" width="24" height="24" viewBox="1 1 22 22"><path d="M2 9 H16 M9 2 V18" stroke="#000" stroke-width="1.2"/><circle cx="9" cy="9" r="4" fill="none" stroke="#e02020" stroke-width="1.3"/><path d="M11 13 L23 13 L19 18 L19 23 L15 22 L15 18z" fill="#ffd030" stroke="#c09000" stroke-width="0.6"/></svg>
<svg style="position:absolute;left:469px;top:85px;overflow:visible" width="24" height="24" viewBox="1 1 22 22"><path d="M12 2 C4 2 1 8 3 13 C5 17 9 14 9 18 C9 22 14 23 18 20 C23 16 23 4 12 2z" fill="#f4dcb0" stroke="#a08060" stroke-width="0.7"/><circle cx="8" cy="7" r="1.8" fill="#3080f0"/><circle cx="13" cy="5" r="1.8" fill="#f0e020"/><circle cx="18" cy="9" r="1.8" fill="#f04020"/><circle cx="17" cy="15" r="1.8" fill="#30c030"/><circle cx="13" cy="19" r="1.8" fill="#2040e0"/></svg>
<div style="position:absolute;left:501px;top:87px;width:63px;height:20px;background:#fff;border:1px solid #606060;border-radius:3px"></div>
<div style="position:absolute;left:547px;top:88px;width:16px;height:18px;background:linear-gradient(#c8e4ff,#5898e8);border-left:1px solid #7aa0d0;border-radius:0 2px 2px 0"></div>
<svg style="position:absolute;left:547px;top:88px;" width="16" height="18" viewBox="0 0 16 18"><path d="M2.5 6.0 H13.5 L8 13.0z" fill="#000"/></svg>
<div style="position:absolute;left:506px;top:88px;white-space:nowrap;font-size:13.5px;color:#000;letter-spacing:0.15px">Alle</div>
<svg style="position:absolute;left:569px;top:85px;overflow:visible" width="24" height="24" viewBox="1 1 22 22"><path d="M18 3 Q20 16 8 15" stroke="#20a0a0" stroke-width="4" fill="none"/><path d="M1 15 L9 9 L9 21z" fill="#20a0a0"/></svg>
<div style="position:absolute;left:600px;top:82px;width:31px;height:30px;background:#fcfcfc;border:1px solid #707070;border-radius:3px"></div>
<svg style="position:absolute;left:603px;top:85px;overflow:visible" width="24" height="24" viewBox="1 1 22 22"><path d="M3 14 Q6 6 14 5 L20 9 L20 20 L8 22z" fill="#e0e8ff" stroke="#4050a0" stroke-width="0.9"/><path d="M14 5 L20 9 L15 13 Q9 14 8 22" stroke="#4050a0" stroke-width="0.8" fill="none"/><path d="M9 9 L15 11" stroke="#e02020" stroke-width="1.8"/></svg>
<svg style="position:absolute;left:634px;top:85px;overflow:visible" width="24" height="24" viewBox="1 1 22 22"><circle cx="12" cy="8" r="4" fill="none" stroke="#b09090" stroke-width="1"/><path d="M12 2 V14 M6 8 H18" stroke="#a0a0a0" stroke-width="1"/><path d="M4 14 Q4 20 9 19" stroke="#b09080" stroke-width="1.8" fill="none"/><path d="M15 21 H17 M18 21 H20 M21 21 H23" stroke="#909090" stroke-width="1.5"/></svg>
<svg style="position:absolute;left:665px;top:85px;overflow:visible" width="24" height="24" viewBox="1 1 22 22"><rect x="2" y="2" width="20" height="20" fill="none" stroke="#e02020" stroke-width="1.6"/><circle cx="12" cy="12" r="4.5" fill="none" stroke="#e02020" stroke-width="1.4"/><path d="M12 4 V20 M4 12 H20" stroke="#000" stroke-width="1.2"/></svg>
<svg style="position:absolute;left:696px;top:85px;overflow:visible" width="24" height="24" viewBox="1 1 22 22"><path d="M4 8 Q9 2 13 8" stroke="#909090" stroke-width="1.5" fill="none"/><path d="M2 5 L6 4 L5 9z" fill="#909090"/><circle cx="15" cy="15" r="4" fill="none" stroke="#c0a0a0" stroke-width="1"/><path d="M15 9 V22 M9 15 H22" stroke="#a0a0a0" stroke-width="1"/></svg>
<svg style="position:absolute;left:727px;top:85px;overflow:visible" width="24" height="24" viewBox="1 1 22 22"><rect x="2" y="2" width="20" height="20" fill="#a8a8a8" stroke="#c0a0a0" stroke-width="0.6"/><circle cx="11" cy="12" r="4" fill="none" stroke="#c09090" stroke-width="1"/><path d="M11 5 V19 M4 12 H18" stroke="#909090" stroke-width="1"/><rect x="17" y="1" width="5" height="5" fill="#fff" stroke="#8080a0" stroke-width="0.6"/></svg>
<svg style="position:absolute;left:758px;top:85px;overflow:visible" width="24" height="24" viewBox="1 1 22 22"><path d="M2 16 H22" stroke="#b0b080" stroke-width="4"/><circle cx="5" cy="16" r="2.5" fill="#d8d8c0" stroke="#b0b080"/><circle cx="12" cy="16" r="2.5" fill="#d8d8c0" stroke="#b0b080"/><circle cx="19" cy="16" r="2.5" fill="#d8d8c0" stroke="#b0b080"/><path d="M7 5 L10 9 L13 5 L10 2z" fill="#c0c080"/></svg>
<svg style="position:absolute;left:789px;top:85px;overflow:visible" width="24" height="24" viewBox="1 1 22 22"><path d="M2 5 L10 3 L13 8" stroke="#909090" stroke-width="3" fill="none"/><rect x="13" y="9" width="4" height="4" fill="#b0b0b0"/><rect x="17" y="15" width="4" height="4" fill="#b0b0b0"/><rect x="17" y="20" width="4" height="4" fill="#b0b0b0"/><path d="M15 13 V22 H17" stroke="#a0a0b0" stroke-width="0.8" fill="none"/></svg>
<div style="position:absolute;left:820px;top:83px;width:2px;height:27px;border-left:1px solid #a8a8a8;border-right:1px solid #fff"></div>
<svg style="position:absolute;left:826px;top:85px;overflow:visible" width="24" height="24" viewBox="1 1 22 22"><rect x="3" y="4" width="18" height="17" fill="none" stroke="#000" stroke-width="1" stroke-dasharray="2,2"/><circle cx="3" cy="4" r="1.8" fill="#e02020"/><circle cx="21" cy="21" r="1.8" fill="#e02020"/></svg>
<svg style="position:absolute;left:857px;top:95px;" width="7" height="4" viewBox="0 0 7 4"><path d="M0 0 H7 L3.5 4z" fill="#000"/></svg>
<div style="position:absolute;left:866px;top:82px;width:31px;height:30px;background:#fcfcfc;border:1px solid #707070;border-radius:3px"></div>
<svg style="position:absolute;left:869px;top:85px;overflow:visible" width="24" height="24" viewBox="1 1 22 22"><path d="M3 7 L12 2 L21 7 L21 17 L12 22 L3 17z" fill="#ffe8d0" stroke="#606060" stroke-width="0.9"/><path d="M12 12 L21 7 L21 17 L12 22z" fill="#ffd8b0"/><path d="M3 7 L12 12 L21 7 M12 12 V22" stroke="#606060" stroke-width="0.8" fill="none"/><path d="M12 2 V12 L3 17 M12 12 L21 17" stroke="#f06060" stroke-width="0.8" fill="none"/></svg>
<div style="position:absolute;left:900px;top:83px;width:2px;height:27px;border-left:1px solid #a8a8a8;border-right:1px solid #fff"></div>
<div style="position:absolute;left:907px;top:87px;width:171px;height:20px;background:#fff;border:1px solid #606060;border-radius:3px"></div>
<div style="position:absolute;left:1061px;top:88px;width:16px;height:18px;background:linear-gradient(#c8e4ff,#5898e8);border-left:1px solid #7aa0d0;border-radius:0 2px 2px 0"></div>
<svg style="position:absolute;left:1061px;top:88px;" width="16" height="18" viewBox="0 0 16 18"><path d="M2.5 6.0 H13.5 L8 13.0z" fill="#000"/></svg>
<div style="position:absolute;left:912px;top:88px;white-space:nowrap;font-size:13.3px;color:#000;letter-spacing:0.15px">Einzelfläche</div>
<svg style="position:absolute;left:1090px;top:86px;overflow:visible" width="20" height="20" viewBox="1 1 22 22"><path d="M2 9 L12 9 L12 4 L21 12 L12 20 L12 15 L2 15z" fill="#60d0e0" stroke="#2080a0" stroke-width="0.9"/></svg>
<svg style="position:absolute;left:1908px;top:103px;" width="7" height="4" viewBox="0 0 7 4"><path d="M0 0 H7 L3.5 4z" fill="#000"/></svg>
<div style="position:absolute;left:930px;top:115px;width:2px;height:20px;background:#a8a8a8;border-right:1px solid #fff"></div>
<div style="position:absolute;left:1862px;top:115px;width:2px;height:20px;background:#a8a8a8;border-right:1px solid #fff"></div>
<div style="position:absolute;left:1882px;top:115px;width:2px;height:20px;background:#a8a8a8;border-right:1px solid #fff"></div>
<div style="position:absolute;left:1918px;top:115px;width:2px;height:20px;background:#a8a8a8;border-right:1px solid #fff"></div>
<svg style="position:absolute;left:10px;top:643px;overflow:visible" width="24" height="24" viewBox="1 1 22 22"><path d="M3 5 L8 3 L8 12 L15 10 L15 16 L3 20z" fill="#4080e0" stroke="#2040a0" stroke-width="0.6"/><path d="M16 9 L22 3" stroke="#f04020" stroke-width="1.8"/><path d="M19 2 L23 2 L22 6z" fill="#f04020"/></svg>
<svg style="position:absolute;left:10px;top:669px;overflow:visible" width="24" height="24" viewBox="1 1 22 22"><ellipse cx="12" cy="13" rx="10" ry="8" fill="none" stroke="#e02020" stroke-width="0.8" stroke-dasharray="1.5,1"/><path d="M5 12 Q7 6 14 6 L20 7 L20 15 L9 19 L5 17z" fill="#a0c8ff" stroke="#3060d0" stroke-width="0.6"/><path d="M14 6 L20 7 L20 15 L14 17z" fill="#2050d0"/></svg>
<svg style="position:absolute;left:10px;top:699px;overflow:visible" width="24" height="24" viewBox="1 1 22 22"><rect x="3" y="3" width="7" height="17" rx="3" fill="#b0d0ff" stroke="#4070d0" stroke-width="0.7"/><ellipse cx="6.5" cy="4" rx="3.5" ry="1.5" fill="#e0f0ff" stroke="#4070d0" stroke-width="0.5"/><rect x="15" y="12" width="6" height="10" rx="2" fill="#b0d0ff" stroke="#4070d0" stroke-width="0.7"/><path d="M11 6 L15 10" stroke="#e04020" stroke-width="1.5"/></svg>
<svg style="position:absolute;left:10px;top:730px;overflow:visible" width="24" height="24" viewBox="1 1 22 22"><polygon points="12.0,3.0 21.0,7.0 12.0,11.0 3.0,7.0" fill="#c0d8ff" stroke="#2050d0" stroke-width="0.6"/><polygon points="3.0,7.0 12.0,11.0 12.0,21.0 3.0,17.0" fill="#80b0f8" stroke="#2050d0" stroke-width="0.6"/><polygon points="12.0,11.0 21.0,7.0 21.0,17.0 12.0,21.0" fill="#2050d0" stroke="#2050d0" stroke-width="0.6"/><ellipse cx="8" cy="13" rx="4" ry="4.5" fill="#f08010" stroke="#a05000" stroke-width="0.6"/></svg>
<svg style="position:absolute;left:10px;top:761px;overflow:visible" width="24" height="24" viewBox="1 1 22 22"><path d="M1 13 L12 5 L23 12 L12 21z" fill="#a8d0ff" stroke="#4070d0" stroke-width="0.7"/><ellipse cx="12" cy="12" rx="7" ry="4" fill="#ffc040" stroke="#d08000" stroke-width="0.8"/><ellipse cx="12" cy="10.5" rx="5" ry="2" fill="#ffe8a0"/></svg>
<svg style="position:absolute;left:10px;top:798px;overflow:visible" width="24" height="24" viewBox="1 1 22 22"><path d="M2 9 L5 5 L12 5 L12 19 L2 19z" fill="#a0c8ff" stroke="#4070d0" stroke-width="0.6"/><path d="M12 5 L22 5 L22 17 L12 19z" fill="#ffc890" stroke="#e02020" stroke-width="0.8" stroke-dasharray="1.5,1"/></svg>
<svg style="position:absolute;left:10px;top:832px;overflow:visible" width="24" height="24" viewBox="1 1 22 22"><path d="M2 12 L12 7 L22 11 L12 16z" fill="#e8f0ff" stroke="#4060c0" stroke-width="0.7"/><path d="M2 12 L2 15 L12 19 L22 14 L22 11" fill="#b0c8f0" stroke="#4060c0" stroke-width="0.7"/><path d="M4 15 L21 5" stroke="#e02020" stroke-width="1.2"/></svg>
<svg style="position:absolute;left:10px;top:858px;overflow:visible" width="24" height="24" viewBox="1 1 22 22"><path d="M2 8 L10 4 L18 8 L10 12z" fill="#e8f0ff" stroke="#4060c0" stroke-width="0.7"/><path d="M8 16 L16 12 L23 16 L15 20z" fill="#e8f0ff" stroke="#4060c0" stroke-width="0.7"/><path d="M5 7 L14 7" stroke="#000" stroke-width="1.5"/><path d="M18 9 Q21 12 19 15" stroke="#f08000" stroke-width="1.5" fill="none"/></svg>
<svg style="position:absolute;left:10px;top:898px;overflow:visible" width="24" height="24" viewBox="1 1 22 22"><rect x="3" y="9" width="11" height="11" fill="#20a090" stroke="#000" stroke-width="1.2"/><circle cx="15" cy="10" r="6" fill="#20a090" stroke="#000" stroke-width="1.2"/><path d="M3 2 V8 M0 5 H6" stroke="#e02020" stroke-width="1.4"/></svg>
<svg style="position:absolute;left:10px;top:930px;overflow:visible" width="24" height="24" viewBox="1 1 22 22"><rect x="3" y="9" width="11" height="11" fill="#20a090" stroke="#000" stroke-width="1.2"/><circle cx="15" cy="10" r="6" fill="none" stroke="#000" stroke-width="1.2"/><path d="M0 4 H6" stroke="#e02020" stroke-width="1.4"/></svg>
<svg style="position:absolute;left:10px;top:961px;overflow:visible" width="24" height="24" viewBox="1 1 22 22"><rect x="3" y="9" width="11" height="11" fill="none" stroke="#000" stroke-width="1.2"/><circle cx="15" cy="10" r="6" fill="none" stroke="#000" stroke-width="1.2"/><path d="M9 9 H14 V14 A6 6 0 0 0 9 9z" fill="#20a090"/><path d="M1 2 L6 7 M6 2 L1 7" stroke="#e02020" stroke-width="1.3"/></svg>
<svg style="position:absolute;left:10px;top:991px;overflow:visible" width="24" height="24" viewBox="1 1 22 22"><rect x="2" y="2" width="20" height="20" fill="#f0f060" stroke="#a0a040" stroke-width="0.8"/><circle cx="12" cy="11" r="7" fill="#d0d0d0" stroke="#404040" stroke-width="1"/><path d="M12 4 A7 7 0 0 1 19 11 L12 11z" fill="#20a090"/><path d="M12 3 V20 M3 11 H21" stroke="#404040" stroke-width="1"/></svg>
<svg style="position:absolute;left:10px;top:1021px;overflow:visible" width="24" height="24" viewBox="1 1 22 22"><path d="M3 10 Q3 4 6 4" stroke="#f08000" stroke-width="1.5" fill="none"/><path d="M3 10 V14 Q3 16 6 15" stroke="#e02020" stroke-width="1.2" fill="none"/><path d="M9 2 V22 M9 8 H13 M9 20 H13" stroke="#a0a0c0" stroke-width="0.8" stroke-dasharray="1,1"/><polygon points="16.5,9.6 21.5,11.8 16.5,13.9 11.6,11.8" fill="#fff8c0" stroke="#c08000" stroke-width="0.6"/><polygon points="11.6,11.8 16.5,13.9 16.5,19.5 11.6,17.2" fill="#ffe060" stroke="#c08000" stroke-width="0.6"/><polygon points="16.5,13.9 21.5,11.8 21.5,17.2 16.5,19.5" fill="#f0b020" stroke="#c08000" stroke-width="0.6"/><rect x="13" y="3" width="3" height="3" fill="#fff" stroke="#808080" stroke-width="0.5"/></svg>
<div style="position:absolute;left:3px;top:793px;width:40px;height:2px;border-top:1px solid #a8a8a8;border-bottom:1px solid #fff"></div>
<div style="position:absolute;left:3px;top:891px;width:40px;height:2px;border-top:1px solid #a8a8a8;border-bottom:1px solid #fff"></div>
<svg style="position:absolute;left:4px;top:1051px;" width="6" height="8" viewBox="0 0 6 8"><path d="M5 0 V8 L0 4z" fill="#000"/></svg>
<div style="position:absolute;left:0px;top:1063px;width:46px;height:68px;background:#d0d0d0;border-top:1px solid #c0c0c0"></div>
<svg style="position:absolute;left:51px;top:640px;overflow:visible" width="24" height="24" viewBox="1 1 22 22"><rect x="4" y="3" width="16" height="15" fill="#4070f0"/><ellipse cx="12" cy="18" rx="8" ry="3" fill="#3060e0"/><rect x="9" y="3" width="3" height="15" fill="#c0d8ff"/></svg>
<svg style="position:absolute;left:51px;top:674px;overflow:visible" width="24" height="24" viewBox="1 1 22 22"><polygon points="10.5,8.8 17.2,11.8 10.5,14.8 3.8,11.8" fill="#fff8c0" stroke="#c08000" stroke-width="0.6"/><polygon points="3.8,11.8 10.5,14.8 10.5,22.2 3.8,19.2" fill="#ffe060" stroke="#c08000" stroke-width="0.6"/><polygon points="10.5,14.8 17.2,11.8 17.2,19.2 10.5,22.2" fill="#f0b020" stroke="#c08000" stroke-width="0.6"/><path d="M9 9 L15 4 L20 3 L22 6 L17 11z" fill="#f8d8a0" stroke="#c09060" stroke-width="0.5"/><rect x="17" y="2" width="5" height="5" fill="#2030c0" transform="rotate(30 19 4)"/></svg>
<svg style="position:absolute;left:51px;top:711px;overflow:visible" width="24" height="24" viewBox="1 1 22 22"><path d="M3 17 L12 13 L21 16 L12 20z" fill="#a0c8ff" stroke="#3060d0" stroke-width="0.7"/><path d="M3 17 V19 L12 23 L21 19 V16" fill="#3060d0"/><ellipse cx="12" cy="5" rx="9" ry="2" fill="#ffc020" stroke="#e06000" stroke-width="0.6"/><path d="M12 13 V7" stroke="#e04000" stroke-width="1.4"/></svg>
<svg style="position:absolute;left:51px;top:742px;overflow:visible" width="24" height="24" viewBox="1 1 22 22"><path d="M5 5 H19 L22 20 H2z" fill="#e0f0e8" stroke="#202020" stroke-width="1.3"/><path d="M6 17 L8 12 H13 L14 9 H18 L19 17z" fill="none" stroke="#3040c0" stroke-width="1"/><circle cx="16" cy="12" r="1.5" fill="none" stroke="#3040c0" stroke-width="0.8"/></svg>
<svg style="position:absolute;left:51px;top:780px;overflow:visible" width="24" height="24" viewBox="1 1 22 22"><path d="M4 3 L20 7 L20 22 L4 18z" fill="#e8f4ec" stroke="#000" stroke-width="1.2"/></svg>
<div style="position:absolute;left:49px;top:669px;width:30px;height:2px;border-top:1px solid #a8a8a8;border-bottom:1px solid #fff"></div>
<div style="position:absolute;left:49px;top:705px;width:30px;height:2px;border-top:1px solid #a8a8a8;border-bottom:1px solid #fff"></div>
<div style="position:absolute;left:49px;top:773px;width:30px;height:2px;border-top:1px solid #a8a8a8;border-bottom:1px solid #fff"></div>
<svg style="position:absolute;left:50px;top:809px;" width="6" height="8" viewBox="0 0 6 8"><path d="M5 0 V8 L0 4z" fill="#000"/></svg>
<svg style="position:absolute;left:68px;top:808px;" width="8" height="10" viewBox="0 0 8 10"><path d="M1 1 L4 4 L7 1 M1 5 L4 8 L7 5" stroke="#000" stroke-width="1.3" fill="none"/></svg>
<div style="position:absolute;left:47px;top:821px;width:33px;height:10px;background:#d6d6d6;border-top:1px solid #c0c0c0;border-bottom:1px solid #f0f0f0"></div>
<div style="position:absolute;left:52px;top:835px;width:24px;height:3px;background:repeating-linear-gradient(90deg,#fff 0,#fff 1px,#a0a0a0 1px,#a0a0a0 2px,transparent 2px,transparent 4px)"></div>
<div style="position:absolute;left:48px;top:840px;width:30px;height:30px;background:#e8e8e8;border:1px solid #b0b0b0;border-radius:3px"></div>
<svg style="position:absolute;left:51px;top:843px;overflow:visible" width="24" height="24" viewBox="1 1 22 22"><polygon points="10.0,1.9 18.1,5.5 10.0,9.1 1.9,5.5" fill="#d0a0f0" stroke="#e02020" stroke-width="0.8"/><polygon points="1.9,5.5 10.0,9.1 10.0,18.1 1.9,14.5" fill="#ffb030" stroke="#e02020" stroke-width="0.8"/><polygon points="10.0,9.1 18.1,5.5 18.1,14.5 10.0,18.1" fill="#9040d0" stroke="#e02020" stroke-width="0.8"/><path d="M15 9 V21 M9 15 H21" stroke="#000" stroke-width="3"/><path d="M15 9 V21 M9 15 H21" stroke="#fff" stroke-width="1.3"/></svg>
<svg style="position:absolute;left:51px;top:873px;overflow:visible" width="24" height="24" viewBox="1 1 22 22"><polygon points="10.0,1.9 18.1,5.5 10.0,9.1 1.9,5.5" fill="#d0a0f0" stroke="#e02020" stroke-width="0.8"/><polygon points="1.9,5.5 10.0,9.1 10.0,18.1 1.9,14.5" fill="#ffb030" stroke="#e02020" stroke-width="0.8"/><polygon points="10.0,9.1 18.1,5.5 18.1,14.5 10.0,18.1" fill="#9040d0" stroke="#e02020" stroke-width="0.8"/><rect x="12" y="11" width="8" height="10" fill="#fff" stroke="#000" stroke-width="1"/><rect x="15" y="8" width="7" height="9" fill="#fff" stroke="#000" stroke-width="1"/></svg>
<svg style="position:absolute;left:51px;top:904px;overflow:visible" width="24" height="24" viewBox="1 1 22 22"><polygon points="10.0,1.9 18.1,5.5 10.0,9.1 1.9,5.5" fill="#d0a0f0" stroke="#e02020" stroke-width="0.8"/><polygon points="1.9,5.5 10.0,9.1 10.0,18.1 1.9,14.5" fill="#ffb030" stroke="#e02020" stroke-width="0.8"/><polygon points="10.0,9.1 18.1,5.5 18.1,14.5 10.0,18.1" fill="#9040d0" stroke="#e02020" stroke-width="0.8"/><path d="M12 10 L22 10 L19 15 L22 21 L12 21 L15 15z" fill="#fff" stroke="#000" stroke-width="1"/></svg>
<svg style="position:absolute;left:51px;top:935px;overflow:visible" width="24" height="24" viewBox="1 1 22 22"><polygon points="10.0,1.9 18.1,5.5 10.0,9.1 1.9,5.5" fill="#d0a0f0" stroke="#e02020" stroke-width="0.8"/><polygon points="1.9,5.5 10.0,9.1 10.0,18.1 1.9,14.5" fill="#ffb030" stroke="#e02020" stroke-width="0.8"/><polygon points="10.0,9.1 18.1,5.5 18.1,14.5 10.0,18.1" fill="#9040d0" stroke="#e02020" stroke-width="0.8"/><circle cx="15" cy="14" r="3" fill="#fff" stroke="#000" stroke-width="1"/><circle cx="21" cy="14" r="3" fill="#fff" stroke="#000" stroke-width="1"/><circle cx="15" cy="20" r="3" fill="#fff" stroke="#000" stroke-width="1"/><circle cx="21" cy="20" r="3" fill="#fff" stroke="#000" stroke-width="1"/></svg>
<svg style="position:absolute;left:51px;top:966px;overflow:visible" width="24" height="24" viewBox="1 1 22 22"><polygon points="10.0,1.9 18.1,5.5 10.0,9.1 1.9,5.5" fill="#d0a0f0" stroke="#e02020" stroke-width="0.8"/><polygon points="1.9,5.5 10.0,9.1 10.0,18.1 1.9,14.5" fill="#ffb030" stroke="#e02020" stroke-width="0.8"/><polygon points="10.0,9.1 18.1,5.5 18.1,14.5 10.0,18.1" fill="#9040d0" stroke="#e02020" stroke-width="0.8"/><path d="M11 11 L22 22 M22 11 L11 22" stroke="#000" stroke-width="2"/></svg>
<svg style="position:absolute;left:51px;top:997px;overflow:visible" width="24" height="24" viewBox="1 1 22 22"><path d="M3 10 Q3 4 10 4 L20 6 L20 18 L10 21 L3 19z" fill="#ffb030" stroke="#e02020" stroke-width="0.8"/><path d="M10 4 L20 6 L20 18 L10 21z" fill="#9040d0"/><path d="M11 22 L17 12 L23 22z" fill="#fff" stroke="#000" stroke-width="1.2"/></svg>
<svg style="position:absolute;left:51px;top:1028px;overflow:visible" width="24" height="24" viewBox="1 1 22 22"><rect x="3" y="4" width="14" height="16" fill="#ffb030" stroke="#e02020" stroke-width="0.8"/><ellipse cx="10" cy="4" rx="7" ry="2.5" fill="#a050e0"/><path d="M11 22 L17 12 L23 22z" fill="#fff" stroke="#000" stroke-width="1.2"/></svg>
<svg style="position:absolute;left:51px;top:1059px;overflow:visible" width="24" height="24" viewBox="1 1 22 22"><path d="M4 6 L16 3 L16 21 L4 19z" fill="#b0d0ff" stroke="#4060c0" stroke-width="0.6"/><polygon points="6.5,9.4 10.6,11.2 6.5,13.1 2.5,11.2" fill="#fff8c0" stroke="#c08000" stroke-width="0.6"/><polygon points="2.5,11.2 6.5,13.1 6.5,17.6 2.5,15.8" fill="#ffe060" stroke="#c08000" stroke-width="0.6"/><polygon points="6.5,13.1 10.6,11.2 10.6,15.8 6.5,17.6" fill="#f0b020" stroke="#c08000" stroke-width="0.6"/><path d="M16 3 L23 8 L23 22 L16 21z" fill="#2040c0"/><path d="M22 6 L16 10 L22 13z M22 14 L16 18 L22 21z" fill="#e02020"/></svg>
<svg style="position:absolute;left:51px;top:1090px;overflow:visible" width="24" height="24" viewBox="1 1 22 22"><path d="M3 3 L8 2 L11 5 L11 11 L3 11z" fill="#4070e0" stroke="#2040a0" stroke-width="0.6"/><path d="M5 13 Q5 18 10 17" stroke="#f08000" stroke-width="1.6" fill="none"/><polygon points="16.0,9.7 22.3,12.5 16.0,15.3 9.7,12.5" fill="#e8f4ff" stroke="#2040b0" stroke-width="0.7"/><polygon points="9.7,12.5 16.0,15.3 16.0,22.3 9.7,19.5" fill="#a8d0ff" stroke="#2040b0" stroke-width="0.7"/><polygon points="16.0,15.3 22.3,12.5 22.3,19.5 16.0,22.3" fill="#3070e0" stroke="#2040b0" stroke-width="0.7"/></svg>
<svg style="position:absolute;left:50px;top:1118px;" width="6" height="8" viewBox="0 0 6 8"><path d="M5 0 V8 L0 4z" fill="#000"/></svg>
<div style="position:absolute;left:1887px;top:152px;width:33px;height:980px;background:linear-gradient(90deg,#a8a8a8,#b8b8b8 30%,#b4b4b4);border-left:1px solid #707070"></div>
<div style="position:absolute;left:1876px;top:150px;width:11px;height:982px;background:#e8e8e8;border-left:1px solid #fff;border-top:1px solid #f8f8f8"></div>
<div style="position:absolute;left:1888px;top:167px;width:26px;height:40px;background:linear-gradient(90deg,#e4e4e4,#d4d4d4);border:1px solid #707070;border-top-color:#f8f8f8;border-left-color:#f8f8f8;box-shadow:1px 1px 0 #505050"></div>
<svg style="position:absolute;left:1890px;top:176px;overflow:visible" width="22" height="22" viewBox="1 1 22 22"><rect x="3" y="3" width="6" height="5" fill="#f0f020" stroke="#808000" stroke-width="0.5"/><rect x="9" y="9" width="5" height="5" fill="#f0f020" stroke="#808000" stroke-width="0.5"/><rect x="9" y="16" width="5" height="5" fill="#f0f020" stroke="#808000" stroke-width="0.5"/><path d="M6 8 V19 H9 M6 11 H9 M14 12 H22 M14 18 H22" stroke="#404040" stroke-width="0.7" fill="none"/></svg>
<div style="position:absolute;left:1888px;top:209px;width:26px;height:40px;background:linear-gradient(90deg,#e4e4e4,#d4d4d4);border:1px solid #707070;border-top-color:#f8f8f8;border-left-color:#f8f8f8;box-shadow:1px 1px 0 #505050"></div>
<svg style="position:absolute;left:1890px;top:218px;overflow:visible" width="22" height="22" viewBox="1 1 22 22"><rect x="3" y="2" width="6" height="6" rx="2" fill="#ffd0d0" stroke="#c04040" stroke-width="0.7"/><path d="M6 8 V20 M6 16 H10 M14 16 H22 M6 9 H22" stroke="#404040" stroke-width="0.7" fill="none"/><circle cx="12" cy="16" r="2.5" fill="none" stroke="#c04040" stroke-width="1"/></svg>
<div style="position:absolute;left:1888px;top:250px;width:26px;height:40px;background:linear-gradient(90deg,#e4e4e4,#d4d4d4);border:1px solid #707070;border-top-color:#f8f8f8;border-left-color:#f8f8f8;box-shadow:1px 1px 0 #505050"></div>
<svg style="position:absolute;left:1890px;top:259px;overflow:visible" width="22" height="22" viewBox="1 1 22 22"><path d="M2 3 L22 12 L9 21z" fill="#f0f0f0" stroke="#404040" stroke-width="0.8"/><path d="M2 12 L12 11 L22 5 L18 20z" fill="#109030"/></svg>
<div style="position:absolute;left:1888px;top:292px;width:26px;height:40px;background:linear-gradient(90deg,#e4e4e4,#d4d4d4);border:1px solid #707070;border-top-color:#f8f8f8;border-left-color:#f8f8f8;box-shadow:1px 1px 0 #505050"></div>
<svg style="position:absolute;left:1890px;top:301px;overflow:visible" width="22" height="22" viewBox="1 1 22 22"><path d="M4 3 V18 Q4 21 8 21 H10" stroke="#4070e0" stroke-width="4" fill="none"/><rect x="13" y="4" width="8" height="15" rx="2" fill="#f8d040" stroke="#a08020" stroke-width="0.8"/><path d="M16 8 H18 M16 13 H18" stroke="#000" stroke-width="1"/></svg>
<div style="position:absolute;left:1886px;top:346px;width:30px;height:44px;background:#ececec;border:1px solid #a0a0a0;border-left:none"></div>
<svg style="position:absolute;left:1890px;top:356px;overflow:visible" width="22" height="22" viewBox="1 1 22 22"><path d="M5 2 L15 2 L20 7 L20 22 L5 22z" fill="#fff8d0" stroke="#a0a080" stroke-width="0.8"/><circle cx="12" cy="14" r="5" fill="#2080e0"/><path d="M9 12 Q12 10 14 14 Q12 17 10 16z" fill="#20a020"/></svg>
<div style="position:absolute;left:1888px;top:390px;width:26px;height:40px;background:linear-gradient(90deg,#e4e4e4,#d4d4d4);border:1px solid #707070;border-top-color:#f8f8f8;border-left-color:#f8f8f8;box-shadow:1px 1px 0 #505050"></div>
<svg style="position:absolute;left:1890px;top:399px;overflow:visible" width="22" height="22" viewBox="1 1 22 22"><rect x="1" y="2" width="22" height="20" fill="#fff" stroke="#2020c0" stroke-width="1.2"/><circle cx="12" cy="12" r="9" fill="#fff" stroke="#2020c0" stroke-width="1.5"/><path d="M3 12 H21 M12 3 V21 M5 7 H19 M5 17 H19" stroke="#2020c0" stroke-width="1.2"/><ellipse cx="12" cy="12" rx="4" ry="9" fill="none" stroke="#2020c0" stroke-width="1.2"/></svg>
<div style="position:absolute;left:1888px;top:432px;width:26px;height:40px;background:linear-gradient(90deg,#e4e4e4,#d4d4d4);border:1px solid #707070;border-top-color:#f8f8f8;border-left-color:#f8f8f8;box-shadow:1px 1px 0 #505050"></div>
<svg style="position:absolute;left:1890px;top:441px;overflow:visible" width="22" height="22" viewBox="1 1 22 22"><path d="M2 2 H22 V18 H14 L10 22 L10 18 H2z" fill="#ffffa0" stroke="#208080" stroke-width="1"/><text x="7" y="15" font-size="13" font-weight="bold" font-family="Liberation Sans" fill="#101080">?</text></svg>
<div style="position:absolute;left:1888px;top:486px;width:26px;height:40px;background:linear-gradient(90deg,#e4e4e4,#d4d4d4);border:1px solid #707070;border-top-color:#f8f8f8;border-left-color:#f8f8f8;box-shadow:1px 1px 0 #505050"></div>
<svg style="position:absolute;left:1890px;top:495px;overflow:visible" width="22" height="22" viewBox="1 1 22 22"><circle cx="12" cy="12" r="10" fill="#f0f0f0" stroke="#606060" stroke-width="1.8"/><path d="M12 5 V12 H17" stroke="#000" stroke-width="1.3" fill="none"/></svg>
<div style="position:absolute;left:1888px;top:527px;width:26px;height:40px;background:linear-gradient(90deg,#e4e4e4,#d4d4d4);border:1px solid #707070;border-top-color:#f8f8f8;border-left-color:#f8f8f8;box-shadow:1px 1px 0 #505050"></div>
<svg style="position:absolute;left:1890px;top:536px;overflow:visible" width="22" height="22" viewBox="1 1 22 22"><path d="M3 5 L9 3 L9 21 L3 22z" fill="#f0f0f0" stroke="#808080" stroke-width="0.7"/><rect x="9" y="3" width="12" height="18" fill="#fff" stroke="#808080" stroke-width="0.7"/><circle cx="12" cy="7" r="1.5" fill="#2040c0"/><circle cx="12" cy="12" r="1.5" fill="#20a020"/><circle cx="12" cy="17" r="1.5" fill="#e02020"/><path d="M15 7 H19 M15 12 H19 M15 17 H19" stroke="#404040" stroke-width="1"/></svg>
<div style="position:absolute;left:1888px;top:569px;width:26px;height:40px;background:linear-gradient(90deg,#e4e4e4,#d4d4d4);border:1px solid #707070;border-top-color:#f8f8f8;border-left-color:#f8f8f8;box-shadow:1px 1px 0 #505050"></div>
<svg style="position:absolute;left:1890px;top:578px;overflow:visible" width="22" height="22" viewBox="1 1 22 22"><defs><linearGradient id="rb" x1="0" y1="0" x2="0" y2="1"><stop offset="0" stop-color="#e02020"/><stop offset="0.35" stop-color="#f0f020"/><stop offset="0.65" stop-color="#20c040"/><stop offset="1" stop-color="#2040e0"/></linearGradient></defs><rect x="3" y="3" width="8" height="19" fill="url(#rb)"/><path d="M12 8 L21 22" stroke="#6060e0" stroke-width="1.5"/><path d="M14 2 L16 7 L20 5" stroke="#ffffa0" stroke-width="1.5" fill="none"/></svg>
<div style="position:absolute;left:1888px;top:611px;width:26px;height:40px;background:linear-gradient(90deg,#e4e4e4,#d4d4d4);border:1px solid #707070;border-top-color:#f8f8f8;border-left-color:#f8f8f8;box-shadow:1px 1px 0 #505050"></div>
<svg style="position:absolute;left:1890px;top:620px;overflow:visible" width="22" height="22" viewBox="1 1 22 22"><circle cx="8" cy="10" r="4" fill="#f0c8a0" stroke="#805030" stroke-width="0.6"/><path d="M1 22 Q2 15 8 15 Q14 15 14 22z" fill="#a030c0"/><circle cx="16" cy="7" r="4" fill="#f0c8a0" stroke="#805030" stroke-width="0.6"/><path d="M10 19 Q10 12 16 12 Q22 12 23 19z" fill="#20a020"/><path d="M12 6 Q16 1 20 6" fill="#806020"/></svg>
<div style="position:absolute;left:1888px;top:654px;width:26px;height:40px;background:linear-gradient(90deg,#e4e4e4,#d4d4d4);border:1px solid #707070;border-top-color:#f8f8f8;border-left-color:#f8f8f8;box-shadow:1px 1px 0 #505050"></div>
<svg style="position:absolute;left:1890px;top:663px;overflow:visible" width="22" height="22" viewBox="1 1 22 22"><rect x="2" y="8" width="14" height="11" fill="#80b0e0" stroke="#404040" stroke-width="0.7"/><path d="M6 22 H14 M9 19 V22" stroke="#606060" stroke-width="1.5"/><path d="M10 10 L20 3" stroke="#f0d0b0" stroke-width="3"/><rect x="18" y="1" width="5" height="4" fill="#3040c0" transform="rotate(-30 20 3)"/></svg>
<div style="position:absolute;left:1888px;top:696px;width:26px;height:40px;background:linear-gradient(90deg,#e4e4e4,#d4d4d4);border:1px solid #707070;border-top-color:#f8f8f8;border-left-color:#f8f8f8;box-shadow:1px 1px 0 #505050"></div>
<svg style="position:absolute;left:1890px;top:705px;overflow:visible" width="22" height="22" viewBox="1 1 22 22"><path d="M2 10 L9 4 L17 6 L12 16z" fill="#a0b8ff" stroke="#5060c0" stroke-width="0.6"/><rect x="12" y="9" width="9" height="12" rx="1" fill="#ffe060" stroke="#b09000" stroke-width="0.6"/><ellipse cx="16.5" cy="9" rx="4.5" ry="2" fill="#fff0a0" stroke="#b09000" stroke-width="0.6"/></svg>
<div style="position:absolute;left:1888px;top:737px;width:26px;height:40px;background:linear-gradient(90deg,#e4e4e4,#d4d4d4);border:1px solid #707070;border-top-color:#f8f8f8;border-left-color:#f8f8f8;box-shadow:1px 1px 0 #505050"></div>
<svg style="position:absolute;left:1890px;top:746px;overflow:visible" width="22" height="22" viewBox="1 1 22 22"><circle cx="12" cy="9" r="6" fill="#806040"/><circle cx="12" cy="10" r="4.5" fill="#f8d0b0"/><path d="M3 22 Q4 15 12 15 Q20 15 21 22z" fill="#9030c0"/></svg>
<div style="position:absolute;left:1888px;top:779px;width:26px;height:40px;background:linear-gradient(90deg,#e4e4e4,#d4d4d4);border:1px solid #707070;border-top-color:#f8f8f8;border-left-color:#f8f8f8;box-shadow:1px 1px 0 #505050"></div>
<svg style="position:absolute;left:1890px;top:788px;overflow:visible" width="22" height="22" viewBox="1 1 22 22"><rect x="2" y="4" width="20" height="16" fill="#2040a0" stroke="#808080" stroke-width="0.8"/><path d="M2 20 L8 12 L13 17 L16 13 L22 20z" fill="#e0e8ff"/><circle cx="18" cy="7" r="2.5" fill="#ffe020"/></svg>
<div style="position:absolute;left:1888px;top:820px;width:26px;height:40px;background:linear-gradient(90deg,#e4e4e4,#d4d4d4);border:1px solid #707070;border-top-color:#f8f8f8;border-left-color:#f8f8f8;box-shadow:1px 1px 0 #505050"></div>
<svg style="position:absolute;left:1890px;top:829px;overflow:visible" width="22" height="22" viewBox="1 1 22 22"><path d="M4 3 L20 8 L20 22 L4 17z" fill="#f0f0ff" stroke="#8080c0" stroke-width="0.9"/><path d="M4 7 L20 12 M4 11 L20 16 M4 14 L20 19 M8 4 V18 M12 5 V19 M16 6 V21" stroke="#8080c0" stroke-width="0.7"/></svg>
<div style="position:absolute;left:1888px;top:863px;width:26px;height:40px;background:linear-gradient(90deg,#e4e4e4,#d4d4d4);border:1px solid #707070;border-top-color:#f8f8f8;border-left-color:#f8f8f8;box-shadow:1px 1px 0 #505050"></div>
<svg style="position:absolute;left:1890px;top:872px;overflow:visible" width="22" height="22" viewBox="1 1 22 22"><path d="M12 3 L20 7 L20 16 L12 21 L4 16 L4 7z" fill="#f09010" stroke="#a06000" stroke-width="0.6"/><path d="M4 7 L12 11 L20 7 L12 3z" fill="#ffb030"/></svg>
<div style="position:absolute;left:1888px;top:905px;width:26px;height:40px;background:linear-gradient(90deg,#e4e4e4,#d4d4d4);border:1px solid #707070;border-top-color:#f8f8f8;border-left-color:#f8f8f8;box-shadow:1px 1px 0 #505050"></div>
<svg style="position:absolute;left:1890px;top:914px;overflow:visible" width="22" height="22" viewBox="1 1 22 22"><ellipse cx="9" cy="12" rx="7" ry="6" fill="#2080e0"/><rect x="9" y="9" width="10" height="9" fill="#3090f0"/><ellipse cx="19" cy="13.5" rx="3" ry="4.5" fill="#60b0ff"/></svg>
<div style="position:absolute;left:1888px;top:947px;width:26px;height:40px;background:linear-gradient(90deg,#e4e4e4,#d4d4d4);border:1px solid #707070;border-top-color:#f8f8f8;border-left-color:#f8f8f8;box-shadow:1px 1px 0 #505050"></div>
<svg style="position:absolute;left:1890px;top:956px;overflow:visible" width="22" height="22" viewBox="1 1 22 22"><path d="M3 9 L19 17" stroke="#808080" stroke-width="7" stroke-linecap="round"/><path d="M3 8 L19 15" stroke="#d0d0d0" stroke-width="2"/></svg>
<div style="position:absolute;left:1888px;top:989px;width:26px;height:40px;background:linear-gradient(90deg,#e4e4e4,#d4d4d4);border:1px solid #707070;border-top-color:#f8f8f8;border-left-color:#f8f8f8;box-shadow:1px 1px 0 #505050"></div>
<svg style="position:absolute;left:1890px;top:998px;overflow:visible" width="22" height="22" viewBox="1 1 22 22"><ellipse cx="12" cy="17" rx="10" ry="4" fill="#404040"/><rect x="2" y="9" width="20" height="8" fill="#505050"/><rect x="2" y="12" width="20" height="3" fill="#e02020"/><ellipse cx="12" cy="9" rx="10" ry="4" fill="#a0a0a0" stroke="#404040" stroke-width="0.6"/><ellipse cx="12" cy="9" rx="4" ry="1.6" fill="#303030"/></svg>
<div style="position:absolute;left:206px;top:1134px;width:2px;height:30px;border-left:1px solid #a8a8a8;border-right:1px solid #fff"></div>
<div style="position:absolute;left:212px;top:1138px;width:2px;height:24px;background:repeating-linear-gradient(#fff 0,#fff 2px,transparent 2px,transparent 4px)"></div>
<div style="position:absolute;left:211px;top:1137px;width:2px;height:24px;background:repeating-linear-gradient(#9a9a9a 0,#9a9a9a 2px,transparent 2px,transparent 4px)"></div>
<svg style="position:absolute;left:217px;top:1138px;overflow:visible" width="24" height="24" viewBox="1 1 22 22"><polygon points="14.0,8.8 21.2,12.0 14.0,15.2 6.8,12.0" fill="#fff8c0" stroke="#c08000" stroke-width="0.6"/><polygon points="6.8,12.0 14.0,15.2 14.0,23.2 6.8,20.0" fill="#ffe060" stroke="#c08000" stroke-width="0.6"/><polygon points="14.0,15.2 21.2,12.0 21.2,20.0 14.0,23.2" fill="#f0b020" stroke="#c08000" stroke-width="0.6"/><circle cx="6" cy="6" r="3" fill="#102080" stroke="#000" stroke-width="0.6"/><circle cx="13" cy="6" r="3" fill="#102080" stroke="#000" stroke-width="0.6"/><rect x="4" y="2" width="11" height="3" fill="#202020"/></svg>
<svg style="position:absolute;left:248px;top:1138px;overflow:visible" width="24" height="24" viewBox="1 1 22 22"><polygon points="15.0,8.8 22.2,12.0 15.0,15.2 7.8,12.0" fill="#fff8c0" stroke="#c08000" stroke-width="0.6"/><polygon points="7.8,12.0 15.0,15.2 15.0,23.2 7.8,20.0" fill="#ffe060" stroke="#c08000" stroke-width="0.6"/><polygon points="15.0,15.2 22.2,12.0 22.2,20.0 15.0,23.2" fill="#f0b020" stroke="#c08000" stroke-width="0.6"/><path d="M1 6 L6 3 L11 5 L10 10 L2 10z" fill="#f0e070" stroke="#a09020" stroke-width="0.5"/><path d="M6 3 Q9 0 11 4" stroke="#20a020" stroke-width="1.3" fill="none"/></svg>
<svg style="position:absolute;left:279px;top:1138px;overflow:visible" width="24" height="24" viewBox="1 1 22 22"><rect x="1" y="1" width="22" height="22" fill="none" stroke="#202020" stroke-width="0.8" stroke-dasharray="1.5,1.5"/><polygon points="8.0,2.5 12.5,4.5 8.0,6.5 3.5,4.5" fill="#fff8c0" stroke="#c08000" stroke-width="0.6"/><polygon points="3.5,4.5 8.0,6.5 8.0,11.5 3.5,9.5" fill="#ffe060" stroke="#c08000" stroke-width="0.6"/><polygon points="8.0,6.5 12.5,4.5 12.5,9.5 8.0,11.5" fill="#f0b020" stroke="#c08000" stroke-width="0.6"/><polygon points="8.0,11.5 12.5,13.5 8.0,15.5 3.5,13.5" fill="#fff8c0" stroke="#c08000" stroke-width="0.6"/><polygon points="3.5,13.5 8.0,15.5 8.0,20.5 3.5,18.5" fill="#ffe060" stroke="#c08000" stroke-width="0.6"/><polygon points="8.0,15.5 12.5,13.5 12.5,18.5 8.0,20.5" fill="#f0b020" stroke="#c08000" stroke-width="0.6"/><polygon points="16.0,11.5 20.5,13.5 16.0,15.5 11.5,13.5" fill="#fff8c0" stroke="#c08000" stroke-width="0.6"/><polygon points="11.5,13.5 16.0,15.5 16.0,20.5 11.5,18.5" fill="#ffe060" stroke="#c08000" stroke-width="0.6"/><polygon points="16.0,15.5 20.5,13.5 20.5,18.5 16.0,20.5" fill="#f0b020" stroke="#c08000" stroke-width="0.6"/></svg>
<svg style="position:absolute;left:310px;top:1138px;overflow:visible" width="24" height="24" viewBox="1 1 22 22"><polygon points="7.0,1.6 12.4,4.0 7.0,6.4 1.6,4.0" fill="#e0f0f8" stroke="#2030c0" stroke-width="1.0"/><polygon points="1.6,4.0 7.0,6.4 7.0,12.4 1.6,10.0" fill="#c8e0f0" stroke="#2030c0" stroke-width="1.0"/><polygon points="7.0,6.4 12.4,4.0 12.4,10.0 7.0,12.4" fill="#a8c8e0" stroke="#2030c0" stroke-width="1.0"/><polygon points="7.0,10.6 12.4,13.0 7.0,15.4 1.6,13.0" fill="#e0f0f8" stroke="#2030c0" stroke-width="1.0"/><polygon points="1.6,13.0 7.0,15.4 7.0,21.4 1.6,19.0" fill="#c8e0f0" stroke="#2030c0" stroke-width="1.0"/><polygon points="7.0,15.4 12.4,13.0 12.4,19.0 7.0,21.4" fill="#a8c8e0" stroke="#2030c0" stroke-width="1.0"/><polygon points="16.5,9.7 22.4,12.2 16.5,14.9 10.7,12.2" fill="#e0f0f8" stroke="#2030c0" stroke-width="1.0"/><polygon points="10.7,12.2 16.5,14.9 16.5,21.4 10.7,18.8" fill="#c8e0f0" stroke="#2030c0" stroke-width="1.0"/><polygon points="16.5,14.9 22.4,12.2 22.4,18.8 16.5,21.4" fill="#a8c8e0" stroke="#2030c0" stroke-width="1.0"/></svg>
<svg style="position:absolute;left:341px;top:1138px;overflow:visible" width="24" height="24" viewBox="1 1 22 22"><rect x="3" y="6" width="18" height="13" rx="2" fill="#50a8a8" stroke="#306060" stroke-width="0.7"/><rect x="7" y="3" width="8" height="4" fill="#70c0c0"/><circle cx="9" cy="13" r="5" fill="#204060" stroke="#80c0e0" stroke-width="1.2"/><circle cx="9" cy="13" r="2" fill="#4080c0"/><path d="M5 20 L21 22" stroke="#a0a0a0" stroke-width="2"/><rect x="12" y="12" width="11" height="11" fill="#2030a0"/><rect x="14" y="12" width="7" height="5" fill="#fff"/></svg>
<svg style="position:absolute;left:372px;top:1138px;overflow:visible" width="24" height="24" viewBox="1 1 22 22"><path d="M2 4 L12 2 L16 6 L16 14 L4 14z" fill="#a0a0a0"/><path d="M8 12 L20 12 L22 20 L10 22z" fill="#b0b0a0"/></svg>
<div style="position:absolute;left:402px;top:1134px;width:2px;height:30px;border-left:1px solid #a8a8a8;border-right:1px solid #fff"></div>
<svg style="position:absolute;left:408px;top:1138px;overflow:visible" width="24" height="24" viewBox="1 1 22 22"><polygon points="6.0,2.5 10.5,4.5 6.0,6.5 1.5,4.5" fill="#fff8c0" stroke="#c08000" stroke-width="0.6"/><polygon points="1.5,4.5 6.0,6.5 6.0,11.5 1.5,9.5" fill="#ffe060" stroke="#c08000" stroke-width="0.6"/><polygon points="6.0,6.5 10.5,4.5 10.5,9.5 6.0,11.5" fill="#f0b020" stroke="#c08000" stroke-width="0.6"/><polygon points="6.0,11.5 10.5,13.5 6.0,15.5 1.5,13.5" fill="#fff8c0" stroke="#c08000" stroke-width="0.6"/><polygon points="1.5,13.5 6.0,15.5 6.0,20.5 1.5,18.5" fill="#ffe060" stroke="#c08000" stroke-width="0.6"/><polygon points="6.0,15.5 10.5,13.5 10.5,18.5 6.0,20.5" fill="#f0b020" stroke="#c08000" stroke-width="0.6"/><polygon points="14.0,11.5 18.5,13.5 14.0,15.5 9.5,13.5" fill="#fff8c0" stroke="#c08000" stroke-width="0.6"/><polygon points="9.5,13.5 14.0,15.5 14.0,20.5 9.5,18.5" fill="#ffe060" stroke="#c08000" stroke-width="0.6"/><polygon points="14.0,15.5 18.5,13.5 18.5,18.5 14.0,20.5" fill="#f0b020" stroke="#c08000" stroke-width="0.6"/><path d="M17 1 V9 M13 5 H21" stroke="#1040e0" stroke-width="2"/></svg>
<svg style="position:absolute;left:439px;top:1138px;overflow:visible" width="24" height="24" viewBox="1 1 22 22"><polygon points="7.0,5.5 11.5,7.5 7.0,9.5 2.5,7.5" fill="#fff8c0" stroke="#c08000" stroke-width="0.6"/><polygon points="2.5,7.5 7.0,9.5 7.0,14.5 2.5,12.5" fill="#ffe060" stroke="#c08000" stroke-width="0.6"/><polygon points="7.0,9.5 11.5,7.5 11.5,12.5 7.0,14.5" fill="#f0b020" stroke="#c08000" stroke-width="0.6"/><polygon points="7.0,12.5 11.5,14.5 7.0,16.5 2.5,14.5" fill="#fff8c0" stroke="#c08000" stroke-width="0.6"/><polygon points="2.5,14.5 7.0,16.5 7.0,21.5 2.5,19.5" fill="#ffe060" stroke="#c08000" stroke-width="0.6"/><polygon points="7.0,16.5 11.5,14.5 11.5,19.5 7.0,21.5" fill="#f0b020" stroke="#c08000" stroke-width="0.6"/><polygon points="15.0,12.5 19.5,14.5 15.0,16.5 10.5,14.5" fill="#fff8c0" stroke="#c08000" stroke-width="0.6"/><polygon points="10.5,14.5 15.0,16.5 15.0,21.5 10.5,19.5" fill="#ffe060" stroke="#c08000" stroke-width="0.6"/><polygon points="15.0,16.5 19.5,14.5 19.5,19.5 15.0,21.5" fill="#f0b020" stroke="#c08000" stroke-width="0.6"/><path d="M3 3 L10 8 M7 2 V9 M3 7 L11 4" stroke="#f0f040" stroke-width="1.4"/><path d="M17 1 V9 M13 5 H21" stroke="#1040e0" stroke-width="2"/></svg>
<svg style="position:absolute;left:470px;top:1138px;overflow:visible" width="24" height="24" viewBox="1 1 22 22"><path d="M2 2 L9 8 M6 1 V9 M2 6 L10 3" stroke="#f0e040" stroke-width="1.3"/><rect x="9" y="6" width="6" height="5" fill="#ffe0c0" stroke="#e02020" stroke-width="0.8"/><path d="M12 11 V23 M12 16 H16 M12 21 H16" stroke="#4040c0" stroke-width="0.8"/><rect x="16" y="14" width="4" height="4" fill="#ffe060" stroke="#a08000" stroke-width="0.5"/><rect x="16" y="19" width="4" height="4" fill="#ffe060" stroke="#a08000" stroke-width="0.5"/></svg>
<svg style="position:absolute;left:501px;top:1138px;overflow:visible" width="24" height="24" viewBox="1 1 22 22"><polygon points="5.5,9.4 9.6,11.2 5.5,13.1 1.4,11.2" fill="#fff8c0" stroke="#c08000" stroke-width="0.6"/><polygon points="1.4,11.2 5.5,13.1 5.5,17.6 1.4,15.8" fill="#ffe060" stroke="#c08000" stroke-width="0.6"/><polygon points="5.5,13.1 9.6,11.2 9.6,15.8 5.5,17.6" fill="#f0b020" stroke="#c08000" stroke-width="0.6"/><polygon points="11.5,9.4 15.6,11.2 11.5,13.1 7.5,11.2" fill="#fff8c0" stroke="#c08000" stroke-width="0.6"/><polygon points="7.5,11.2 11.5,13.1 11.5,17.6 7.5,15.8" fill="#ffe060" stroke="#c08000" stroke-width="0.6"/><polygon points="11.5,13.1 15.6,11.2 15.6,15.8 11.5,17.6" fill="#f0b020" stroke="#c08000" stroke-width="0.6"/><polygon points="17.5,9.4 21.6,11.2 17.5,13.1 13.4,11.2" fill="#fff8c0" stroke="#c08000" stroke-width="0.6"/><polygon points="13.4,11.2 17.5,13.1 17.5,17.6 13.4,15.8" fill="#ffe060" stroke="#c08000" stroke-width="0.6"/><polygon points="17.5,13.1 21.6,11.2 21.6,15.8 17.5,17.6" fill="#f0b020" stroke="#c08000" stroke-width="0.6"/><path d="M17 1 V8 M13.5 4.5 H20.5" stroke="#1040e0" stroke-width="1.8"/></svg>
<svg style="position:absolute;left:532px;top:1138px;overflow:visible" width="24" height="24" viewBox="1 1 22 22"><polygon points="7.0,1.6 12.4,4.0 7.0,6.4 1.6,4.0" fill="#fff8c0" stroke="#c08000" stroke-width="0.6"/><polygon points="1.6,4.0 7.0,6.4 7.0,12.4 1.6,10.0" fill="#ffe060" stroke="#c08000" stroke-width="0.6"/><polygon points="7.0,6.4 12.4,4.0 12.4,10.0 7.0,12.4" fill="#f0b020" stroke="#c08000" stroke-width="0.6"/><rect x="9" y="9" width="10" height="10" fill="#e0e0e0" stroke="#a0a0a0" stroke-width="0.5"/><path d="M9 11 L21 23 M21 11 L9 23" stroke="#101010" stroke-width="1.8"/></svg>
<svg style="position:absolute;left:563px;top:1138px;overflow:visible" width="24" height="24" viewBox="1 1 22 22"><polygon points="15.0,2.7 21.3,5.5 15.0,8.3 8.7,5.5" fill="#fff8c0" stroke="#c08000" stroke-width="0.6"/><polygon points="8.7,5.5 15.0,8.3 15.0,15.3 8.7,12.5" fill="#ffe060" stroke="#c08000" stroke-width="0.6"/><polygon points="15.0,8.3 21.3,5.5 21.3,12.5 15.0,15.3" fill="#f0b020" stroke="#c08000" stroke-width="0.6"/><path d="M3 22 L8 17 M3 22 H7 M3 22 V18 M18 3 L22 3 L22 7" stroke="#3060e0" stroke-width="1.2" fill="none"/></svg>
<svg style="position:absolute;left:595px;top:1138px;overflow:visible" width="24" height="24" viewBox="1 1 22 22"><path d="M12 1 V23" stroke="#2030c0" stroke-width="1.5"/><path d="M7 1 L12 5 L17 1" fill="none" stroke="#2030c0" stroke-width="1.5"/><rect x="2" y="14" width="8" height="8" fill="#ffe020" stroke="#a08000" stroke-width="0.5"/><path d="M14 14 L22 22 L14 22z" fill="#e02020"/></svg>
<svg style="position:absolute;left:626px;top:1138px;overflow:visible" width="24" height="24" viewBox="1 1 22 22"><path d="M7 8 V23" stroke="#2030c0" stroke-width="1.3"/><rect x="1" y="15" width="5" height="7" fill="#ffe020" stroke="#a08000" stroke-width="0.5"/><path d="M2 8 H12" stroke="#e02020" stroke-width="1"/><rect x="12" y="4" width="12" height="12" fill="#2030a0"/><rect x="14" y="4" width="8" height="5" fill="#fff"/><rect x="15" y="12" width="5" height="4" fill="#000"/></svg>
<svg style="position:absolute;left:656px;top:1138px;overflow:visible" width="24" height="24" viewBox="1 1 22 22"><polygon points="15.5,6.8 22.2,9.8 15.5,12.8 8.8,9.8" fill="#fff8c0" stroke="#c08000" stroke-width="0.6"/><polygon points="8.8,9.8 15.5,12.8 15.5,20.2 8.8,17.2" fill="#ffe060" stroke="#c08000" stroke-width="0.6"/><polygon points="15.5,12.8 22.2,9.8 22.2,17.2 15.5,20.2" fill="#f0b020" stroke="#c08000" stroke-width="0.6"/><path d="M2 4 L10 2 L10 18 L2 20z" fill="#f8e0b0" stroke="#e0a060" stroke-width="0.5" opacity="0.8"/></svg>
<svg style="position:absolute;left:687px;top:1138px;overflow:visible" width="24" height="24" viewBox="1 1 22 22"><polygon points="7.5,1.6 13.3,4.2 7.5,6.9 1.6,4.2" fill="#fff8c0" stroke="#c08000" stroke-width="0.6"/><polygon points="1.6,4.2 7.5,6.9 7.5,13.3 1.6,10.8" fill="#ffe060" stroke="#c08000" stroke-width="0.6"/><polygon points="7.5,6.9 13.3,4.2 13.3,10.8 7.5,13.3" fill="#f0b020" stroke="#c08000" stroke-width="0.6"/><path d="M4 14 Q4 19 8 18" stroke="#e04020" stroke-width="1.4" fill="none"/><polygon points="16.0,9.7 22.3,12.5 16.0,15.3 9.7,12.5" fill="#e0f0ff" stroke="#6080b0" stroke-width="0.5"/><polygon points="9.7,12.5 16.0,15.3 16.0,22.3 9.7,19.5" fill="#c0dcf8" stroke="#6080b0" stroke-width="0.5"/><polygon points="16.0,15.3 22.3,12.5 22.3,19.5 16.0,22.3" fill="#90b8e8" stroke="#6080b0" stroke-width="0.5"/></svg>
<svg style="position:absolute;left:718px;top:1138px;overflow:visible" width="24" height="24" viewBox="1 1 22 22"><path d="M3 21 L13 11" stroke="#e0b020" stroke-width="3.5"/><circle cx="4" cy="20" r="3" fill="none" stroke="#e0b020" stroke-width="2"/><polygon points="16.0,1.7 22.3,4.5 16.0,7.3 9.7,4.5" fill="#e0f0ff" stroke="#6080b0" stroke-width="0.5"/><polygon points="9.7,4.5 16.0,7.3 16.0,14.3 9.7,11.5" fill="#c0dcf8" stroke="#6080b0" stroke-width="0.5"/><polygon points="16.0,7.3 22.3,4.5 22.3,11.5 16.0,14.3" fill="#90b8e8" stroke="#6080b0" stroke-width="0.5"/></svg>
<svg style="position:absolute;left:749px;top:1138px;overflow:visible" width="24" height="24" viewBox="1 1 22 22"><path d="M3 21 L12 12" stroke="#e0b020" stroke-width="3.5"/><circle cx="4" cy="20" r="3" fill="none" stroke="#e0b020" stroke-width="2"/><polygon points="14.0,1.4 17.6,3.0 14.0,4.6 10.4,3.0" fill="#fff8c0" stroke="#c08000" stroke-width="0.6"/><polygon points="10.4,3.0 14.0,4.6 14.0,8.6 10.4,7.0" fill="#ffe060" stroke="#c08000" stroke-width="0.6"/><polygon points="14.0,4.6 17.6,3.0 17.6,7.0 14.0,8.6" fill="#f0b020" stroke="#c08000" stroke-width="0.6"/><polygon points="10.0,9.4 13.6,11.0 10.0,12.6 6.4,11.0" fill="#fff8c0" stroke="#c08000" stroke-width="0.6"/><polygon points="6.4,11.0 10.0,12.6 10.0,16.6 6.4,15.0" fill="#ffe060" stroke="#c08000" stroke-width="0.6"/><polygon points="10.0,12.6 13.6,11.0 13.6,15.0 10.0,16.6" fill="#f0b020" stroke="#c08000" stroke-width="0.6"/><polygon points="18.0,9.4 21.6,11.0 18.0,12.6 14.4,11.0" fill="#fff8c0" stroke="#c08000" stroke-width="0.6"/><polygon points="14.4,11.0 18.0,12.6 18.0,16.6 14.4,15.0" fill="#ffe060" stroke="#c08000" stroke-width="0.6"/><polygon points="18.0,12.6 21.6,11.0 21.6,15.0 18.0,16.6" fill="#f0b020" stroke="#c08000" stroke-width="0.6"/></svg>
<svg style="position:absolute;left:780px;top:1138px;overflow:visible" width="24" height="24" viewBox="1 1 22 22"><rect x="3" y="3" width="17" height="17" fill="none" stroke="#e02020" stroke-width="1" stroke-dasharray="2,1"/><rect x="7" y="7" width="10" height="10" fill="#f0f0ff" stroke="#4040a0" stroke-width="1.2"/><circle cx="3" cy="3" r="1.5" fill="#e02020"/><circle cx="20" cy="20" r="1.5" fill="#e02020"/><path d="M15 22 Q21 20 20 14" stroke="#f06020" stroke-width="1.3" fill="none"/></svg>
<div style="position:absolute;left:813px;top:1134px;width:2px;height:30px;border-left:1px solid #a8a8a8;border-right:1px solid #fff"></div>
<div style="position:absolute;left:815px;top:1134px;width:31px;height:30px;background:#fcfcfc;border:1px solid #707070;border-radius:3px"></div>
<svg style="position:absolute;left:818px;top:1138px;overflow:visible" width="24" height="24" viewBox="1 1 22 22"><polygon points="7.0,1.5 11.5,3.5 7.0,5.5 2.5,3.5" fill="#fff8c0" stroke="#c08000" stroke-width="0.6"/><polygon points="2.5,3.5 7.0,5.5 7.0,10.5 2.5,8.5" fill="#ffe060" stroke="#c08000" stroke-width="0.6"/><polygon points="7.0,5.5 11.5,3.5 11.5,8.5 7.0,10.5" fill="#f0b020" stroke="#c08000" stroke-width="0.6"/><polygon points="7.0,11.5 11.5,13.5 7.0,15.5 2.5,13.5" fill="#fff8c0" stroke="#c08000" stroke-width="0.6"/><polygon points="2.5,13.5 7.0,15.5 7.0,20.5 2.5,18.5" fill="#ffe060" stroke="#c08000" stroke-width="0.6"/><polygon points="7.0,15.5 11.5,13.5 11.5,18.5 7.0,20.5" fill="#f0b020" stroke="#c08000" stroke-width="0.6"/><polygon points="16.0,11.5 20.5,13.5 16.0,15.5 11.5,13.5" fill="#fff8c0" stroke="#c08000" stroke-width="0.6"/><polygon points="11.5,13.5 16.0,15.5 16.0,20.5 11.5,18.5" fill="#ffe060" stroke="#c08000" stroke-width="0.6"/><polygon points="16.0,15.5 20.5,13.5 20.5,18.5 16.0,20.5" fill="#f0b020" stroke="#c08000" stroke-width="0.6"/></svg>
<svg style="position:absolute;left:849px;top:1138px;overflow:visible" width="24" height="24" viewBox="1 1 22 22"><rect x="11" y="2" width="9" height="9" fill="#fff" stroke="#a0a0a0" stroke-width="0.8"/><rect x="4" y="12" width="9" height="9" fill="#ffe8d0" stroke="#e02020" stroke-width="1"/><path d="M11 11 L13 13" stroke="#404040" stroke-width="1"/></svg>
<div style="position:absolute;left:880px;top:1134px;width:2px;height:30px;border-left:1px solid #a8a8a8;border-right:1px solid #fff"></div>
<svg style="position:absolute;left:886px;top:1138px;overflow:visible" width="24" height="24" viewBox="1 1 22 22"><polygon points="9.0,5.8 16.2,9.0 9.0,12.2 1.8,9.0" fill="#f0f0f0" stroke="#b0b0b0" stroke-width="0.6"/><polygon points="1.8,9.0 9.0,12.2 9.0,20.2 1.8,17.0" fill="#e0e0e0" stroke="#b0b0b0" stroke-width="0.6"/><polygon points="9.0,12.2 16.2,9.0 16.2,17.0 9.0,20.2" fill="#d0d0d0" stroke="#b0b0b0" stroke-width="0.6"/><polygon points="15.0,1.7 21.3,4.5 15.0,7.3 8.7,4.5" fill="#fff8c0" stroke="#c08000" stroke-width="0.6"/><polygon points="8.7,4.5 15.0,7.3 15.0,14.3 8.7,11.5" fill="#ffe060" stroke="#c08000" stroke-width="0.6"/><polygon points="15.0,7.3 21.3,4.5 21.3,11.5 15.0,14.3" fill="#f0b020" stroke="#c08000" stroke-width="0.6"/></svg>
<svg style="position:absolute;left:917px;top:1138px;overflow:visible" width="24" height="24" viewBox="1 1 22 22"><rect x="2" y="2" width="20" height="20" fill="#e8ecff" stroke="#2030c0" stroke-width="1.4"/><rect x="2" y="2" width="20" height="3" fill="#3050e0"/><polygon points="12.5,6.7 18.4,9.2 12.5,11.9 6.7,9.2" fill="#fff8c0" stroke="#c08000" stroke-width="0.6"/><polygon points="6.7,9.2 12.5,11.9 12.5,18.4 6.7,15.8" fill="#ffe060" stroke="#c08000" stroke-width="0.6"/><polygon points="12.5,11.9 18.4,9.2 18.4,15.8 12.5,18.4" fill="#f0b020" stroke="#c08000" stroke-width="0.6"/></svg>
<svg style="position:absolute;left:949px;top:1138px;overflow:visible" width="24" height="24" viewBox="1 1 22 22"><ellipse cx="9" cy="9" rx="4" ry="7" fill="none" stroke="#d8c020" stroke-width="2.3"/><ellipse cx="14" cy="16" rx="4" ry="7" fill="none" stroke="#c0a010" stroke-width="2.3"/></svg>
<svg style="position:absolute;left:979px;top:1138px;overflow:visible" width="24" height="24" viewBox="1 1 22 22"><path d="M12 1 L22 7 L22 17 L12 23 L2 17 L2 7z" fill="#ffd020" stroke="#c09000" stroke-width="0.8"/><path d="M7 12 L12 6 L17 12 L12 18z" fill="#fff" stroke="#2030b0" stroke-width="1.4"/><path d="M12 6 L17 12 L12 18z" fill="#3050d0"/></svg>
<div style="position:absolute;left:1010px;top:1134px;width:2px;height:30px;border-left:1px solid #a8a8a8;border-right:1px solid #fff"></div>
<svg style="position:absolute;left:1017px;top:1138px;overflow:visible" width="24" height="24" viewBox="1 1 22 22"><path d="M3 6 H9 M15 6 H21" stroke="#e02020" stroke-width="1.2"/><rect x="6" y="9" width="6" height="6" fill="#f0f040" stroke="#808000" stroke-width="0.5"/><rect x="2" y="15" width="6" height="6" fill="#f0f040" stroke="#808000" stroke-width="0.5"/><rect x="8" y="15" width="6" height="6" fill="#f0f040" stroke="#808000" stroke-width="0.5"/><path d="M12 18 L16 23 L23 12" stroke="#20a040" stroke-width="2" fill="none"/></svg>
<svg style="position:absolute;left:1046px;top:1155px;" width="7" height="4" viewBox="0 0 7 4"><path d="M0 0 H7 L3.5 4z" fill="#000"/></svg>
<div style="position:absolute;left:1057px;top:1134px;width:2px;height:30px;border-left:1px solid #a8a8a8;border-right:1px solid #fff"></div>
<div style="position:absolute;left:1059px;top:1132px;width:31px;height:34px;background:#dadada"></div>
<div style="position:absolute;left:1090px;top:1134px;width:2px;height:30px;border-left:1px solid #a8a8a8;border-right:1px solid #fff"></div>
<div style="position:absolute;left:1095px;top:1138px;width:2px;height:24px;background:repeating-linear-gradient(#fff 0,#fff 2px,transparent 2px,transparent 4px)"></div>
<div style="position:absolute;left:1094px;top:1137px;width:2px;height:24px;background:repeating-linear-gradient(#9a9a9a 0,#9a9a9a 2px,transparent 2px,transparent 4px)"></div>
<svg style="position:absolute;left:1099px;top:1138px;overflow:visible" width="24" height="24" viewBox="1 1 22 22"><polygon points="7.0,3.5 11.5,5.5 7.0,7.5 2.5,5.5" fill="#fff8c0" stroke="#c08000" stroke-width="0.6"/><polygon points="2.5,5.5 7.0,7.5 7.0,12.5 2.5,10.5" fill="#ffe060" stroke="#c08000" stroke-width="0.6"/><polygon points="7.0,7.5 11.5,5.5 11.5,10.5 7.0,12.5" fill="#f0b020" stroke="#c08000" stroke-width="0.6"/><polygon points="7.0,12.5 11.5,14.5 7.0,16.5 2.5,14.5" fill="#fff8c0" stroke="#c08000" stroke-width="0.6"/><polygon points="2.5,14.5 7.0,16.5 7.0,21.5 2.5,19.5" fill="#ffe060" stroke="#c08000" stroke-width="0.6"/><polygon points="7.0,16.5 11.5,14.5 11.5,19.5 7.0,21.5" fill="#f0b020" stroke="#c08000" stroke-width="0.6"/><polygon points="16.0,12.5 20.5,14.5 16.0,16.5 11.5,14.5" fill="#fff8c0" stroke="#c08000" stroke-width="0.6"/><polygon points="11.5,14.5 16.0,16.5 16.0,21.5 11.5,19.5" fill="#ffe060" stroke="#c08000" stroke-width="0.6"/><polygon points="16.0,16.5 20.5,14.5 20.5,19.5 16.0,21.5" fill="#f0b020" stroke="#c08000" stroke-width="0.6"/><path d="M11 4 L19 13 M16 3 L14 14 M10 9 L21 8" stroke="#f0f040" stroke-width="1.3"/></svg>
<svg style="position:absolute;left:1131px;top:1138px;overflow:visible" width="24" height="24" viewBox="1 1 22 22"><path d="M2 7 H12 V21" stroke="#a0a0a0" stroke-width="4" fill="none"/><rect x="14" y="8" width="8" height="7" fill="#b0b0b0"/></svg>
<svg style="position:absolute;left:1162px;top:1138px;overflow:visible" width="24" height="24" viewBox="1 1 22 22"><path d="M3 13 L9 9 L14 12 L8 16z M10 8 L16 4 L21 7 L15 11z" fill="#b0b0b0" stroke="#909090"/><path d="M3 21 L20 5" stroke="#909090" stroke-width="1.5"/><path d="M8 20 L14 16 L19 19 L13 23z" fill="#a8a8a8"/></svg>
<svg style="position:absolute;left:1193px;top:1138px;overflow:visible" width="24" height="24" viewBox="1 1 22 22"><rect x="6" y="3" width="7" height="7" fill="#b0b0b0"/><rect x="4" y="11" width="12" height="11" fill="#a0a0a0"/></svg>
<svg style="position:absolute;left:1224px;top:1138px;overflow:visible" width="24" height="24" viewBox="1 1 22 22"><polygon points="7.0,2.5 11.5,4.5 7.0,6.5 2.5,4.5" fill="#fff8c0" stroke="#c08000" stroke-width="0.6"/><polygon points="2.5,4.5 7.0,6.5 7.0,11.5 2.5,9.5" fill="#ffe060" stroke="#c08000" stroke-width="0.6"/><polygon points="7.0,6.5 11.5,4.5 11.5,9.5 7.0,11.5" fill="#f0b020" stroke="#c08000" stroke-width="0.6"/><polygon points="16.0,10.6 21.4,13.0 16.0,15.4 10.6,13.0" fill="#fff8c0" stroke="#c08000" stroke-width="0.6"/><polygon points="10.6,13.0 16.0,15.4 16.0,21.4 10.6,19.0" fill="#ffe060" stroke="#c08000" stroke-width="0.6"/><polygon points="16.0,15.4 21.4,13.0 21.4,19.0 16.0,21.4" fill="#f0b020" stroke="#c08000" stroke-width="0.6"/><path d="M4 20 L20 6 M6 6 L20 20" stroke="#101010" stroke-width="1.8"/></svg>
<div style="position:absolute;left:1255px;top:1134px;width:2px;height:30px;border-left:1px solid #a8a8a8;border-right:1px solid #fff"></div>
<div style="position:absolute;left:1262px;top:1139px;width:154px;height:20px;background:#dcdcdc;border:1px solid #b8b8b8;border-radius:3px"></div>
<div style="position:absolute;left:1399px;top:1140px;width:16px;height:18px;background:#e8e8e8;border-left:1px solid #c8c8c8"></div>
<svg style="position:absolute;left:1399px;top:1140px;" width="16" height="18" viewBox="0 0 16 18"><path d="M3 6.0 H13 L8 12.0z" fill="#b8b8b8"/></svg>
<div style="position:absolute;left:1268px;top:1140px;white-space:nowrap;font-size:13px;color:#b4b4b4;letter-spacing:0.2px"></div>
<div style="position:absolute;left:1423px;top:1134px;width:2px;height:30px;border-left:1px solid #a8a8a8;border-right:1px solid #fff"></div>
<svg style="position:absolute;left:1428px;top:1138px;overflow:visible" width="24" height="24" viewBox="1 1 22 22"><path d="M1 6 L7 10 L1 14z" fill="#e02020"/><polygon points="15.0,2.8 22.2,6.0 15.0,9.2 7.8,6.0" fill="#f0f0f0" stroke="#909090" stroke-width="0.6"/><polygon points="7.8,6.0 15.0,9.2 15.0,17.2 7.8,14.0" fill="#d8d8d8" stroke="#909090" stroke-width="0.6"/><polygon points="15.0,9.2 22.2,6.0 22.2,14.0 15.0,17.2" fill="#b8b8b8" stroke="#909090" stroke-width="0.6"/></svg>
<svg style="position:absolute;left:1459px;top:1138px;overflow:visible" width="24" height="24" viewBox="1 1 22 22"><path d="M1 6 L7 10 L1 14z" fill="#e02020"/><polygon points="15.0,2.8 22.2,6.0 15.0,9.2 7.8,6.0" fill="#fff8c0" stroke="#c08000" stroke-width="0.6"/><polygon points="7.8,6.0 15.0,9.2 15.0,17.2 7.8,14.0" fill="#ffe060" stroke="#c08000" stroke-width="0.6"/><polygon points="15.0,9.2 22.2,6.0 22.2,14.0 15.0,17.2" fill="#f0b020" stroke="#c08000" stroke-width="0.6"/></svg>
<svg style="position:absolute;left:1492px;top:1138px;overflow:visible" width="24" height="24" viewBox="1 1 22 22"><path d="M3 22 Q9 18 10 10 Q11 4 20 4" stroke="#101010" stroke-width="1.3" fill="none"/><circle cx="3" cy="22" r="1.6" fill="#2040e0"/><circle cx="20" cy="4" r="1.6" fill="#2040e0"/></svg>
<svg style="position:absolute;left:1521px;top:1155px;" width="7" height="4" viewBox="0 0 7 4"><path d="M0 0 H7 L3.5 4z" fill="#000"/></svg>
<div style="position:absolute;left:1532px;top:1134px;width:2px;height:30px;border-left:1px solid #a8a8a8;border-right:1px solid #fff"></div>
<div style="position:absolute;left:108px;top:1174px;width:4px;height:20px;background:repeating-linear-gradient(#0a2a90 0,#0a2a90 2px,transparent 2px,transparent 4px);box-shadow:1px 1px 0 #40b0ff"></div>
<svg style="position:absolute;left:119px;top:1175px;" width="18" height="18" viewBox="0 0 18 18"><rect x="1" y="2" width="15" height="13" fill="#e8f0ff" stroke="#3050b0"/><path d="M4 6 L9 9 L14 4" stroke="#3050b0" fill="none"/><circle cx="5" cy="10" r="3" fill="#f0c020"/></svg>
<svg style="position:absolute;left:143px;top:1175px;" width="18" height="18" viewBox="0 0 18 18"><rect x="3" y="1" width="10" height="11" fill="#a0d0ff" stroke="#5080c0"/><ellipse cx="8" cy="14" rx="5" ry="2" fill="#c0c0c0"/></svg>
<svg style="position:absolute;left:166px;top:1175px;" width="18" height="18" viewBox="0 0 18 18"><path d="M4 9 H14 A5 5 0 1 0 12.5 13" stroke="#1a8af0" stroke-width="2.6" fill="none"/><ellipse cx="9" cy="9" rx="8.5" ry="3" fill="none" stroke="#f0c020" stroke-width="1" transform="rotate(-25 9 9)"/></svg>
<svg style="position:absolute;left:189px;top:1175px;" width="18" height="18" viewBox="0 0 18 18"><rect x="1" y="1" width="16" height="16" fill="#f8e8c0" stroke="#e08010" stroke-width="1.5"/><circle cx="9" cy="9" r="5" fill="none" stroke="#d08010" stroke-width="1.3"/><path d="M9 6 V9 H12" stroke="#d08010" stroke-width="1.2" fill="none"/></svg>
<svg style="position:absolute;left:213px;top:1175px;" width="18" height="18" viewBox="0 0 18 18"><rect x="1" y="1" width="16" height="16" fill="#fff" stroke="#8090c0"/><text x="2" y="14" font-size="12" font-weight="bold" font-style="italic" fill="#2040b0" font-family="Liberation Serif">W</text></svg>
<svg style="position:absolute;left:236px;top:1175px;" width="18" height="18" viewBox="0 0 18 18"><rect x="1" y="1" width="16" height="16" fill="#fff" stroke="#208040"/><text x="3" y="14" font-size="12" font-weight="bold" fill="#209040" font-family="Liberation Sans">X</text></svg>
<svg style="position:absolute;left:258px;top:1175px;" width="18" height="18" viewBox="0 0 18 18"><path d="M1 14 Q6 2 16 8 L12 9 Q8 8 2 15z" fill="#e0f0ff" stroke="#2060a0" stroke-width="1"/></svg>
<svg style="position:absolute;left:282px;top:1175px;" width="18" height="18" viewBox="0 0 18 18"><rect x="2" y="1" width="14" height="16" fill="#1020e0"/><path d="M9 2 Q15 5 10 9 L15 16 H12 L8 10" fill="#fff"/></svg>
<svg style="position:absolute;left:305px;top:1175px;" width="18" height="18" viewBox="0 0 18 18"><rect x="3" y="1" width="12" height="16" fill="#a0b0d0" stroke="#506090"/><rect x="5" y="3" width="8" height="3" fill="#e0f0ff"/></svg>
<svg style="position:absolute;left:328px;top:1175px;" width="18" height="18" viewBox="0 0 18 18"><rect x="2" y="3" width="13" height="14" fill="#fff8d0" stroke="#908060"/><path d="M6 12 L15 2" stroke="#e08020" stroke-width="2"/></svg>
<svg style="position:absolute;left:350px;top:1175px;" width="18" height="18" viewBox="0 0 18 18"><path d="M5 17 L3 5 M9 17 L9 3 M13 17 L15 5" stroke="#e04020" stroke-width="2.2"/><rect x="3" y="12" width="12" height="5" fill="#e8c040"/></svg>
<svg style="position:absolute;left:373px;top:1175px;" width="18" height="18" viewBox="0 0 18 18"><circle cx="9" cy="10" r="6" fill="#3070e0"/><path d="M3 13 Q9 18 16 8" stroke="#f0b020" stroke-width="2" fill="none"/><path d="M4 1 L11 3 L7 9z" fill="#e02020"/></svg>
<svg style="position:absolute;left:397px;top:1175px;" width="18" height="18" viewBox="0 0 18 18"><rect x="1" y="2" width="16" height="14" fill="#fff" stroke="#303030"/><rect x="1" y="2" width="16" height="3" fill="#303030"/><text x="3" y="13" font-size="7" fill="#303030">CO</text></svg>
<svg style="position:absolute;left:420px;top:1175px;" width="18" height="18" viewBox="0 0 18 18"><path d="M9 1 L17 16 H1z" fill="#f8e020" stroke="#404000" stroke-width="1.2"/><path d="M9 6 V11" stroke="#000" stroke-width="1.5"/></svg>
<div style="position:absolute;left:448px;top:1174px;width:4px;height:20px;background:repeating-linear-gradient(#0a2a90 0,#0a2a90 2px,transparent 2px,transparent 4px);box-shadow:1px 1px 0 #40b0ff"></div>
<div style="position:absolute;left:458px;top:1174px;width:139px;height:23px;background:linear-gradient(#5a9af8 0,#3c80f4 15%,#3a7cf0 85%,#2a64d8 100%);border-radius:3px;box-shadow:inset 1px 1px 0 rgba(255,255,255,0.25)"></div>
<svg style="position:absolute;left:467px;top:1177px;" width="17" height="17" viewBox="0 0 17 17"><rect x="1" y="1" width="16" height="16" fill="#f8e8c0" stroke="#e08010" stroke-width="1.5"/><circle cx="9" cy="9" r="5" fill="none" stroke="#d08010" stroke-width="1.3"/><path d="M9 6 V9 H12" stroke="#d08010" stroke-width="1.2" fill="none"/></svg>
<div style="position:absolute;left:486px;top:1179px;white-space:nowrap;font-size:11.3px;color:#fff;letter-spacing:-0.1px">Posteingang - Mic...</div>
<div style="position:absolute;left:600px;top:1174px;width:139px;height:23px;background:linear-gradient(#5a9af8 0,#3c80f4 15%,#3a7cf0 85%,#2a64d8 100%);border-radius:3px;box-shadow:inset 1px 1px 0 rgba(255,255,255,0.25)"></div>
<svg style="position:absolute;left:609px;top:1177px;" width="17" height="17" viewBox="0 0 17 17"><rect x="1" y="1" width="15" height="15" fill="#a89020" stroke="#605010"/><circle cx="8.5" cy="8.5" r="5.5" fill="#c0a020" stroke="#fff" stroke-width="1.2"/><path d="M5.5 6 H11.5 M8.5 6 V12" stroke="#fff" stroke-width="1.6"/></svg>
<div style="position:absolute;left:628px;top:1179px;white-space:nowrap;font-size:11.3px;color:#fff;letter-spacing:-0.1px">Teamcenter Engin...</div>
<div style="position:absolute;left:741px;top:1174px;width:139px;height:23px;background:linear-gradient(#5a9af8 0,#3c80f4 15%,#3a7cf0 85%,#2a64d8 100%);border-radius:3px;box-shadow:inset 1px 1px 0 rgba(255,255,255,0.25)"></div>
<svg style="position:absolute;left:750px;top:1177px;" width="17" height="17" viewBox="0 0 17 17"><rect x="1" y="3" width="16" height="12" fill="#000" stroke="#c0c0c0" stroke-width="0.8"/><text x="2" y="12" font-size="7" fill="#fff" font-family="Liberation Mono">C:\</text></svg>
<div style="position:absolute;left:769px;top:1179px;white-space:nowrap;font-size:11.3px;color:#fff;letter-spacing:-0.1px">TAO ImR</div>
<div style="position:absolute;left:884px;top:1174px;width:139px;height:23px;background:linear-gradient(#5a9af8 0,#3c80f4 15%,#3a7cf0 85%,#2a64d8 100%);border-radius:3px;box-shadow:inset 1px 1px 0 rgba(255,255,255,0.25)"></div>
<svg style="position:absolute;left:893px;top:1177px;" width="17" height="17" viewBox="0 0 17 17"><circle cx="9" cy="9" r="6" fill="#2080e0"/><path d="M6 6 Q9 4 11 8 Q9 12 7 11z" fill="#30b030"/><path d="M2 13 Q9 18 16 5" stroke="#f0c020" stroke-width="1.6" fill="none"/></svg>
<div style="position:absolute;left:912px;top:1179px;white-space:nowrap;font-size:11.3px;color:#fff;letter-spacing:-0.1px">Mein Teamcenter ...</div>
<div style="position:absolute;left:1027px;top:1174px;width:139px;height:23px;background:linear-gradient(#5a9af8 0,#3c80f4 15%,#3a7cf0 85%,#2a64d8 100%);border-radius:3px;box-shadow:inset 1px 1px 0 rgba(255,255,255,0.25)"></div>
<svg style="position:absolute;left:1036px;top:1177px;" width="17" height="17" viewBox="0 0 17 17"><path d="M1 4 H7 L9 6 H16 V15 H1z" fill="#e8c050" stroke="#a08020" stroke-width="0.7"/><path d="M2 8 H17 L15 15 H1z" fill="#f8dc70" stroke="#a08020" stroke-width="0.7"/></svg>
<div style="position:absolute;left:1055px;top:1179px;white-space:nowrap;font-size:11.3px;color:#fff;letter-spacing:-0.1px">O:\UGS\Daten\NX...</div>
<div style="position:absolute;left:1170px;top:1174px;width:139px;height:23px;background:linear-gradient(#1e4eb0,#2658c8);border-radius:3px;box-shadow:inset 1px 1px 0 rgba(255,255,255,0.25)"></div>
<svg style="position:absolute;left:1179px;top:1177px;" width="17" height="17" viewBox="0 0 17 17"><circle cx="9" cy="10" r="6" fill="#3070e0"/><path d="M3 13 Q9 18 16 8" stroke="#f0b020" stroke-width="2" fill="none"/><path d="M4 1 L11 3 L7 9z" fill="#e02020"/></svg>
<div style="position:absolute;left:1198px;top:1179px;white-space:nowrap;font-size:11.3px;color:#fff;letter-spacing:-0.1px">NX5 Teamcenter -...</div>
<div style="position:absolute;left:1314px;top:1174px;width:139px;height:23px;background:linear-gradient(#5a9af8 0,#3c80f4 15%,#3a7cf0 85%,#2a64d8 100%);border-radius:3px;box-shadow:inset 1px 1px 0 rgba(255,255,255,0.25)"></div>
<svg style="position:absolute;left:1323px;top:1177px;" width="17" height="17" viewBox="0 0 17 17"><path d="M4 1 H12 L15 4 V17 H4z" fill="#f8f8f8" stroke="#808080" stroke-width="0.8"/><text x="0" y="14" font-size="13" font-weight="bold" font-style="italic" fill="#1a70e0" font-family="Liberation Serif">e</text></svg>
<div style="position:absolute;left:1342px;top:1179px;white-space:nowrap;font-size:11.3px;color:#fff;letter-spacing:-0.1px">Foren auf CAD.de...</div>
<div style="position:absolute;left:1457px;top:1174px;width:139px;height:23px;background:linear-gradient(#5a9af8 0,#3c80f4 15%,#3a7cf0 85%,#2a64d8 100%);border-radius:3px;box-shadow:inset 1px 1px 0 rgba(255,255,255,0.25)"></div>
<svg style="position:absolute;left:1466px;top:1177px;" width="17" height="17" viewBox="0 0 17 17"><path d="M4 1 H12 L15 4 V17 H4z" fill="#f8f8f8" stroke="#808080" stroke-width="0.8"/><text x="0" y="14" font-size="13" font-weight="bold" font-style="italic" fill="#1a70e0" font-family="Liberation Serif">e</text></svg>
<div style="position:absolute;left:1485px;top:1179px;white-space:nowrap;font-size:11.3px;color:#fff;letter-spacing:-0.1px">Foren auf CAD.de...</div>
<div style="position:absolute;left:1600px;top:1174px;width:139px;height:23px;background:linear-gradient(#5a9af8 0,#3c80f4 15%,#3a7cf0 85%,#2a64d8 100%);border-radius:3px;box-shadow:inset 1px 1px 0 rgba(255,255,255,0.25)"></div>
<svg style="position:absolute;left:1609px;top:1177px;" width="17" height="17" viewBox="0 0 17 17"><path d="M5 17 L3 5 M9 17 L9 3 M13 17 L15 5" stroke="#e04020" stroke-width="2.2"/><rect x="3" y="12" width="12" height="5" fill="#e8c040"/></svg>
<div style="position:absolute;left:1628px;top:1179px;white-space:nowrap;font-size:11.3px;color:#fff;letter-spacing:-0.1px">hole_1.PNG - Paint</div>
<div style="position:absolute;left:1755px;top:1170px;width:165px;height:30px;background:linear-gradient(#20b0fa,#0c92f0 15%,#1094f0 80%,#0a74da);border-left:1px solid #70d8ff;border-top:1px solid #40b8ff"></div>
<svg style="position:absolute;left:1766px;top:1177px;" width="17" height="17" viewBox="0 0 17 17"><rect x="1" y="1" width="15" height="15" fill="#fff0d8" stroke="#e08010" stroke-width="1.5"/><circle cx="8.5" cy="8.5" r="5" fill="none" stroke="#d08010" stroke-width="1.2"/><path d="M8.5 5 V8.5 H11" stroke="#d08010" stroke-width="1.1" fill="none"/></svg>
<svg style="position:absolute;left:1785px;top:1177px;" width="17" height="17" viewBox="0 0 17 17"><rect x="6" y="1" width="9" height="8" fill="#303870" stroke="#a0a8d0" stroke-width="0.6"/><rect x="1" y="5" width="9" height="8" fill="#303870" stroke="#a0a8d0" stroke-width="0.6"/><ellipse cx="5" cy="15" rx="4" ry="1.5" fill="#d0d0e0"/></svg>
<svg style="position:absolute;left:1803px;top:1177px;" width="17" height="17" viewBox="0 0 17 17"><rect x="1" y="1" width="15" height="15" fill="#e8e8f8" stroke="#8030c0" stroke-width="1"/><path d="M4 5 L10 3 L13 6 L8 13 L5 12z" fill="none" stroke="#8030c0" stroke-width="1"/><path d="M10 8 L13 6 L12 13" stroke="#30a030" stroke-width="1.2" fill="none"/></svg>
<svg style="position:absolute;left:1821px;top:1177px;" width="17" height="17" viewBox="0 0 17 17"><rect x="1" y="1" width="15" height="15" fill="#ffff00" stroke="#404040" stroke-width="1.5"/><path d="M2 8 H6 L8 3 L9 13 L11 8 H15" stroke="#e02020" stroke-width="1.1" fill="none"/></svg>
<svg style="position:absolute;left:1839px;top:1177px;" width="17" height="17" viewBox="0 0 17 17"><circle cx="6" cy="7" r="5" fill="#808080" stroke="#404040" stroke-width="0.8"/><circle cx="5.5" cy="6.5" r="2" fill="#c0c0d0"/><path d="M9 15 Q13 13 15 9" stroke="#a0a0ff" stroke-width="1" fill="none"/></svg>
<svg style="position:absolute;left:1857px;top:1177px;" width="17" height="17" viewBox="0 0 17 17"><path d="M2 5 L8 1 L10 5 L6 9z" fill="#30c030"/><rect x="4" y="9" width="11" height="6" fill="#808080" stroke="#303030" stroke-width="0.6" transform="rotate(-25 9 12)"/></svg>
<div style="position:absolute;left:1879px;top:1179px;white-space:nowrap;font-size:12.5px;color:#fff;letter-spacing:0.3px">11:41</div>
<svg style="position:absolute;left:0px;top:0px;pointer-events:none" width="1920" height="1200" viewBox="0 0 1920 1200">
<polygon points="572,391 840,612 827,1067 558,844" fill="#5a5a5a"/>
<polygon points="840,612 1284,494 1272,947 827,1067" fill="#6b6b6b"/>
<polygon points="1016,270.5 1284,494 840,612 572,391" fill="#cccccc"/>
<g stroke="#2a2624" stroke-width="1.7" fill="none" stroke-linejoin="round">
<polygon points="1016,270.5 1284,494 1272,947 827,1067 558,844 572,391"/>
<polyline points="572,391 840,612 1284,494"/>
<line x1="840" y1="612" x2="827" y2="1067"/>
</g>
<defs><linearGradient id="hole" x1="0" x2="1" y1="0" y2="0"><stop offset="0" stop-color="#a0a0a0"/><stop offset="0.25" stop-color="#fafafa"/><stop offset="0.5" stop-color="#d8d8d8"/><stop offset="0.75" stop-color="#fafafa"/><stop offset="1" stop-color="#8a8a8a"/></linearGradient>
<linearGradient id="hole2" x1="0" x2="1" y1="0" y2="0"><stop offset="0" stop-color="#787878"/><stop offset="0.5" stop-color="#505050"/><stop offset="1" stop-color="#5a5a5a"/></linearGradient></defs>
<ellipse cx="714.5" cy="411.3" rx="31.4" ry="16.1" fill="url(#hole)" stroke="#262626" stroke-width="1.5"/>
<ellipse cx="714.4" cy="418.9" rx="21.2" ry="8.5" fill="url(#hole2)" stroke="#262626" stroke-width="1.5"/>
<g stroke="#dcdcdc" stroke-width="1" fill="none">
<line x1="1002" y1="680" x2="1002" y2="760"/>
<line x1="981" y1="704" x2="1020" y2="737"/>
<line x1="960" y1="735" x2="1038" y2="714"/>
<polygon points="1002,682 998,708 1006,708"/>
<polygon points="962,734 985,724 987,730"/>
<polygon points="1026,744 1010,728 1006,734"/>
</g>
<g fill="#e0e0e0" font-size="10" font-family="Liberation Sans">
<text x="1003" y="666">YC</text><text x="946" y="738">ZC</text><text x="1036" y="751">XC</text>
</g>
<g stroke-width="3" stroke-linecap="round">
<line x1="154" y1="1057" x2="154" y2="1025" stroke="#0010ff"/>
<line x1="155" y1="1056" x2="185" y2="1049" stroke="#00ee00"/>
<line x1="155" y1="1058" x2="172" y2="1073" stroke="#ff1010"/>
</g>
<rect x="150" y="1054" width="7" height="7" rx="2" fill="#888"/>
<g font-size="10" font-family="Liberation Sans">
<text x="151" y="1023" fill="#0010ff">Z</text><text x="191" y="1051" fill="#00dd00">Y</text><text x="176" y="1082" fill="#ff1010">X</text>
</g>
</svg>
<div style="position:absolute;left:7px;top:159px;width:361px;height:490px;background:#e8e8e8;border:1px solid #9a9a9a;border-top-color:#b0b0b0"></div>
<div style="position:absolute;left:7px;top:640px;width:361px;height:10px;background:linear-gradient(#8890a0 0,#5a6a88 1px,#3a4660 40%,#000 55%,#000 85%,#505050 100%);"></div>
<div style="position:absolute;left:8px;top:136px;width:21px;height:23px;background:linear-gradient(#f6f6f6,#dcdcdc);border:1px solid #9a9a9a"></div>
<svg style="position:absolute;left:8px;top:136px;" width="21" height="23" viewBox="0 0 21 23"><path d="M13 6 L7 11.5 L13 17" stroke="#686868" stroke-width="2.6" fill="none"/></svg>
<div style="position:absolute;left:29px;top:136px;width:244px;height:23px;background:linear-gradient(#5f6f92 0,#3a4560 35%,#000 65%,#1a1e28 90%,#505868 100%);border:1px solid #707070"></div>
<div style="position:absolute;left:51px;top:137px;width:1px;height:21px;background:#8a92a0"></div>
<div style="position:absolute;left:204px;top:137px;width:1px;height:21px;background:#8a92a0"></div>
<div style="position:absolute;left:227px;top:137px;width:1px;height:21px;background:#8a92a0"></div>
<div style="position:absolute;left:250px;top:137px;width:1px;height:21px;background:#8a92a0"></div>
<div style="position:absolute;left:55px;top:138px;white-space:nowrap;font-size:14px;font-weight:bold;color:#fff;letter-spacing:0.45px">Fläche verschieben</div>
<div style="position:absolute;left:273px;top:136px;width:22px;height:23px;background:linear-gradient(#f6f6f6,#dcdcdc);border:1px solid #9a9a9a"></div>
<svg style="position:absolute;left:273px;top:136px;" width="22" height="23" viewBox="0 0 22 23"><path d="M8 6 L14 11.5 L8 17" stroke="#686868" stroke-width="2.6" fill="none"/></svg>
<svg style="position:absolute;left:29px;top:137px;" width="22" height="21" viewBox="0 0 22 21"><path d="M6 6 L14 14 M14 9 L14 14 L9 14" stroke="#fff" stroke-width="2.5" fill="none"/></svg>
<svg style="position:absolute;left:204px;top:137px;" width="23" height="21" viewBox="0 0 23 21"><path d="M8 13 A5 5 0 1 0 10 6" stroke="#fff" stroke-width="2.3" fill="none"/><path d="M6 5 L11 5 L10 10z" fill="#fff"/></svg>
<svg style="position:absolute;left:227px;top:137px;" width="23" height="21" viewBox="0 0 23 21"><rect x="6" y="6" width="11" height="3" fill="#fff"/></svg>
<svg style="position:absolute;left:250px;top:137px;" width="22" height="21" viewBox="0 0 22 21"><path d="M6 6 L16 16 M16 6 L6 16" stroke="#fff" stroke-width="2.6"/></svg>
<div style="position:absolute;left:14px;top:166px;width:348px;height:24px;background:linear-gradient(#fafbfb 0,#f4f5f5 50%,#e6e6e6 55%,#dcdcdc 100%);border-top:1px solid #fff;border-bottom:1px solid #a0a0a0"></div>
<div style="position:absolute;left:337px;top:167px;width:1px;height:22px;background:#c0c0c0;border-right:1px solid #fff"></div>
<div style="position:absolute;left:20px;top:170px;white-space:nowrap;font-size:13px;font-weight:bold;color:#000;letter-spacing:0.5px">Typ</div>
<svg style="position:absolute;left:0px;top:0px;" width="370" height="196" viewBox="0 0 370 196"><path d="M345 182 L350 175 L355 182" stroke="#606060" stroke-width="2.4" fill="none"/></svg>
<div style="position:absolute;left:14px;top:190px;width:348px;height:43px;background:#d4d4d4;border-left:1px solid #c4c4c4;border-right:1px solid #f0f0f0;box-shadow:inset 0 2px 2px #bcbcbc"></div>
<div style="position:absolute;left:14px;top:232px;width:348px;height:24px;background:linear-gradient(#fafbfb 0,#f4f5f5 50%,#e6e6e6 55%,#dcdcdc 100%);border-top:1px solid #fff;border-bottom:1px solid #a0a0a0"></div>
<div style="position:absolute;left:337px;top:233px;width:1px;height:22px;background:#c0c0c0;border-right:1px solid #fff"></div>
<div style="position:absolute;left:20px;top:236px;white-space:nowrap;font-size:13px;font-weight:bold;color:#000;letter-spacing:0.5px">Zu verschiebende Fläche</div>
<svg style="position:absolute;left:0px;top:0px;" width="370" height="262" viewBox="0 0 370 262"><path d="M345 248 L350 241 L355 248" stroke="#606060" stroke-width="2.4" fill="none"/></svg>
<div style="position:absolute;left:14px;top:256px;width:348px;height:47px;background:#d4d4d4;border-left:1px solid #c4c4c4;border-right:1px solid #f0f0f0;box-shadow:inset 0 2px 2px #bcbcbc"></div>
<div style="position:absolute;left:14px;top:303px;width:348px;height:24px;background:linear-gradient(#fafbfb 0,#f4f5f5 50%,#e6e6e6 55%,#dcdcdc 100%);border-top:1px solid #fff;border-bottom:1px solid #a0a0a0"></div>
<div style="position:absolute;left:337px;top:304px;width:1px;height:22px;background:#c0c0c0;border-right:1px solid #fff"></div>
<div style="position:absolute;left:20px;top:307px;white-space:nowrap;font-size:13px;font-weight:bold;color:#000;letter-spacing:0.5px">Achse</div>
<svg style="position:absolute;left:0px;top:0px;" width="370" height="333" viewBox="0 0 370 333"><path d="M345 319 L350 312 L355 319" stroke="#606060" stroke-width="2.4" fill="none"/></svg>
<div style="position:absolute;left:14px;top:327px;width:348px;height:107px;background:#d4d4d4;border-left:1px solid #c4c4c4;border-right:1px solid #f0f0f0;box-shadow:inset 0 2px 2px #bcbcbc"></div>
<div style="position:absolute;left:14px;top:434px;width:348px;height:24px;background:linear-gradient(#fafbfb 0,#f4f5f5 50%,#e6e6e6 55%,#dcdcdc 100%);border-top:1px solid #fff;border-bottom:1px solid #a0a0a0"></div>
<div style="position:absolute;left:337px;top:435px;width:1px;height:22px;background:#c0c0c0;border-right:1px solid #fff"></div>
<div style="position:absolute;left:20px;top:438px;white-space:nowrap;font-size:13px;font-weight:bold;color:#000;letter-spacing:0.5px">Winkel</div>
<svg style="position:absolute;left:0px;top:0px;" width="370" height="464" viewBox="0 0 370 464"><path d="M345 450 L350 443 L355 450" stroke="#606060" stroke-width="2.4" fill="none"/></svg>
<div style="position:absolute;left:14px;top:458px;width:348px;height:43px;background:#d4d4d4;border-left:1px solid #c4c4c4;border-right:1px solid #f0f0f0;box-shadow:inset 0 2px 2px #bcbcbc"></div>
<div style="position:absolute;left:14px;top:500px;width:348px;height:24px;background:linear-gradient(#fafbfb 0,#f4f5f5 50%,#e6e6e6 55%,#dcdcdc 100%);border-top:1px solid #fff;border-bottom:1px solid #a0a0a0"></div>
<div style="position:absolute;left:337px;top:501px;width:1px;height:22px;background:#c0c0c0;border-right:1px solid #fff"></div>
<div style="position:absolute;left:20px;top:504px;white-space:nowrap;font-size:13px;font-weight:bold;color:#000;letter-spacing:0.5px">Benachbarte Verrundungsfläche</div>
<svg style="position:absolute;left:0px;top:0px;" width="370" height="530" viewBox="0 0 370 530"><path d="M345 516 L350 509 L355 516" stroke="#606060" stroke-width="2.4" fill="none"/></svg>
<div style="position:absolute;left:14px;top:524px;width:348px;height:48px;background:#d4d4d4;border-left:1px solid #c4c4c4;border-right:1px solid #f0f0f0;box-shadow:inset 0 2px 2px #bcbcbc"></div>
<div style="position:absolute;left:14px;top:571px;width:348px;height:24px;background:linear-gradient(#fafbfb 0,#f4f5f5 50%,#e6e6e6 55%,#dcdcdc 100%);border-top:1px solid #fff;border-bottom:1px solid #a0a0a0"></div>
<div style="position:absolute;left:337px;top:572px;width:1px;height:22px;background:#c0c0c0;border-right:1px solid #fff"></div>
<div style="position:absolute;left:20px;top:575px;white-space:nowrap;font-size:13px;font-weight:bold;color:#000;letter-spacing:0.5px">Vorschau</div>
<svg style="position:absolute;left:0px;top:0px;" width="370" height="601" viewBox="0 0 370 601"><path d="M345 580 L350 587 L355 580" stroke="#606060" stroke-width="2.4" fill="none"/></svg>
<div style="position:absolute;left:14px;top:599px;width:348px;height:1px;background:#c8c8c8;border-bottom:1px solid #fff"></div>
<div style="position:absolute;left:23px;top:198px;width:330px;height:25px;background:#fff;border:1px solid #707070;border-radius:3px"></div>
<div style="position:absolute;left:334px;top:199px;width:18px;height:23px;background:linear-gradient(#a8d0f8,#4a8ee0);border-left:1px solid #6a9ad0"></div>
<svg style="position:absolute;left:334px;top:199px;" width="18" height="23" viewBox="0 0 18 23"><path d="M4 9 L14 9 L9 15z" fill="#000"/></svg>
<svg style="position:absolute;left:26px;top:201px;" width="18" height="18" viewBox="0 0 18 18"><path d="M7 4 A5.5 5.5 0 1 0 14 8" stroke="#e02000" stroke-width="1.6" fill="none"/><path d="M5 2 L9 4 L6 7z" fill="#e02000"/><path d="M3 16 L15 3" stroke="#000" stroke-width="1.2"/></svg>
<div style="position:absolute;left:46px;top:201px;white-space:nowrap;font-size:15px;letter-spacing:0.3px">Winkel</div>
<div style="position:absolute;left:22px;top:263px;width:295px;height:31px;background:linear-gradient(90deg,#e0a572 0%,#deae80 40%,#dac0a8 70%,#d6d2ce 100%);border-radius:5px"></div>
<div style="position:absolute;left:27px;top:268px;white-space:nowrap;font-size:22px;color:#e00000">*</div>
<div style="position:absolute;left:41px;top:270px;white-space:nowrap;font-size:15px;letter-spacing:0.3px">Fläche auswählen (0)</div>
<div style="position:absolute;left:321px;top:264px;width:31px;height:31px;background:linear-gradient(#fff4ec 0,#ffd8b8 35%,#f89858 50%,#ffc8a0 100%);border:1px solid #505860;box-shadow:inset 0 0 0 1px #ff7010;border-radius:4px"></div>
<svg style="position:absolute;left:324px;top:266px;" width="26" height="26" viewBox="0 0 26 26"><g transform="scale(1.4444444444444444)"><polygon points="9,1 17,4.5 9,8 1,4.5" fill="#f4f4f4" stroke="#888" stroke-width="0.6"/><polygon points="1,4.5 9,8 9,17 1,13.5" fill="#ffc020" stroke="#e02020" stroke-width="0.8"/><polygon points="9,8 17,4.5 17,13.5 9,17" fill="#c8c8c8" stroke="#888" stroke-width="0.6"/></g></svg>
<div style="position:absolute;left:27px;top:339px;white-space:nowrap;font-size:22px;color:#e00000">*</div>
<div style="position:absolute;left:42px;top:341px;white-space:nowrap;font-size:15px;letter-spacing:0.3px">Vektor angeben (0)</div>
<div style="position:absolute;left:21px;top:371px;white-space:nowrap;font-size:15px;letter-spacing:0.45px;color:#a8a8a8">Richtung umkehren</div>
<div style="position:absolute;left:27px;top:399px;white-space:nowrap;font-size:22px;color:#e00000">*</div>
<div style="position:absolute;left:41px;top:402px;white-space:nowrap;font-size:15px;letter-spacing:0.3px">Punkt (0) angeben</div>
<div style="position:absolute;left:281px;top:339px;width:22px;height:22px;background:linear-gradient(#fafafa,#dcdcdc);border:1px solid #8a8a8a;border-radius:3px"></div>
<svg style="position:absolute;left:281px;top:339px;" width="22" height="22" viewBox="0 0 22 22"><path d="M11 17 L11 6 M8 9 L11 5 L14 9" stroke="#d00000" stroke-width="1.5" fill="none"/><path d="M4 12 Q4 17 9 17" stroke="#f08000" stroke-width="2" fill="none"/><rect x="12" y="16" width="2" height="2"/><rect x="15" y="16" width="2" height="2"/><rect x="18" y="16" width="2" height="2"/></svg>
<div style="position:absolute;left:307px;top:338px;width:46px;height:25px;background:linear-gradient(#c8f0b8,#58b848);border:1px solid #3a8a2a;border-radius:3px"></div>
<div style="position:absolute;left:335px;top:339px;width:1px;height:23px;background:#3a8a2a"></div>
<svg style="position:absolute;left:307px;top:338px;" width="28" height="25" viewBox="0 0 28 25"><path d="M8 20 L12 4 M10 7 L12 3 L14 7" stroke="#c00000" stroke-width="1.5" fill="none"/><path d="M18 4 L13 13 L17 13 L12 22 L20 10 L16 10z" fill="#ffe030" stroke="#806000" stroke-width="0.6"/></svg>
<svg style="position:absolute;left:336px;top:338px;" width="17" height="25" viewBox="0 0 17 25"><path d="M4 11 L12 11 L8 16z" fill="#000"/></svg>
<div style="position:absolute;left:331px;top:369px;width:22px;height:22px;background:linear-gradient(#fafafa,#e8e8e8);border:1px solid #b8b8b8;border-radius:3px"></div>
<svg style="position:absolute;left:331px;top:369px;" width="22" height="22" viewBox="0 0 22 22"><path d="M6 16 L16 6" stroke="#9898d0" stroke-width="1"/><path d="M11 4 L13 9 L9 9z M11 18 L9 13 L13 13z" fill="#a0a0e0"/></svg>
<div style="position:absolute;left:281px;top:399px;width:22px;height:22px;background:linear-gradient(#fafafa,#dcdcdc);border:1px solid #8a8a8a;border-radius:3px"></div>
<svg style="position:absolute;left:281px;top:399px;" width="22" height="22" viewBox="0 0 22 22"><path d="M11 4 L11 12 M7 8 L15 8" stroke="#000" stroke-width="1.3"/><path d="M4 12 Q4 17 9 17" stroke="#f08000" stroke-width="2" fill="none"/><rect x="12" y="16" width="2" height="2"/><rect x="15" y="16" width="2" height="2"/><rect x="18" y="16" width="2" height="2"/></svg>
<div style="position:absolute;left:307px;top:398px;width:46px;height:25px;background:linear-gradient(#f8f8f8,#d8d8d8);border:1px solid #8a8a8a;border-radius:3px"></div>
<div style="position:absolute;left:336px;top:399px;width:16px;height:23px;background:linear-gradient(#a8d0f8,#4a8ee0)"></div>
<svg style="position:absolute;left:307px;top:398px;" width="28" height="25" viewBox="0 0 28 25"><path d="M18 3 L12 13 L16 13 L10 22 L20 10 L16 10z" fill="#ffe030" stroke="#806000" stroke-width="0.6"/><circle cx="19" cy="19" r="2" fill="#e00000"/></svg>
<svg style="position:absolute;left:336px;top:398px;" width="17" height="25" viewBox="0 0 17 25"><path d="M4 11 L12 11 L8 16z" fill="#000"/></svg>
<div style="position:absolute;left:22px;top:471px;white-space:nowrap;font-size:15px;letter-spacing:0.3px">Winkel</div>
<div style="position:absolute;left:191px;top:466px;width:162px;height:25px;background:#fff;border:1px solid #707070;border-radius:3px"></div>
<div style="position:absolute;left:285px;top:467px;width:50px;height:23px;background:#ececec"></div>
<div style="position:absolute;left:194px;top:469px;width:22px;height:19px;background:#3060c8"></div>
<div style="position:absolute;left:195px;top:470px;white-space:nowrap;font-size:15px;color:#fff;letter-spacing:2px">15</div>
<div style="position:absolute;left:288px;top:470px;white-space:nowrap;font-size:15px;letter-spacing:0.2px;overflow:hidden;width:45px">degree</div>
<div style="position:absolute;left:335px;top:467px;width:17px;height:23px;background:linear-gradient(#a8d0f8,#4a8ee0)"></div>
<svg style="position:absolute;left:335px;top:467px;" width="17" height="23" viewBox="0 0 17 23"><path d="M6 5 L11 5 L11 10 L14 10 L8.5 17 L3 10 L6 10z" fill="#000"/></svg>
<div style="position:absolute;left:22px;top:539px;white-space:nowrap;font-size:15px;letter-spacing:0.44px">Verrundungsfläche auswählen (0)</div>
<div style="position:absolute;left:321px;top:532px;width:31px;height:31px;background:linear-gradient(#fafafa,#dcdcdc);border:1px solid #8a8a8a;border-radius:3px"></div>
<svg style="position:absolute;left:324px;top:535px;" width="26" height="26" viewBox="0 0 26 26"><path d="M3 9 Q5 4 11 3 L22 6 L14 10 Q8 10 3 9z" fill="#f4f4f4" stroke="#808080" stroke-width="0.7"/><path d="M3 9 Q8 10 14 10 L14 23 L4 20 Q2 15 3 9z" fill="#ffc020" stroke="#e02020" stroke-width="1"/><polygon points="14,10 22,6 22,19 14,23" fill="#c8c8c8" stroke="#808080" stroke-width="0.7"/></svg>
<div style="position:absolute;left:24px;top:604px;width:105px;height:26px;background:linear-gradient(#fbfbfb 0,#f0f0f0 45%,#dedede 55%,#e8e8e8 100%);border:1px solid #a8a8a8;border-radius:3px"></div>
<div style="position:absolute;left:24px;top:609px;width:105px;text-align:center;font-size:15px;color:#9a9a9a;letter-spacing:0.27px">OK</div>
<div style="position:absolute;left:135px;top:604px;width:105px;height:26px;background:linear-gradient(#fbfbfb 0,#f0f0f0 45%,#dedede 55%,#e8e8e8 100%);border:1px solid #a8a8a8;border-radius:3px"></div>
<div style="position:absolute;left:135px;top:609px;width:105px;text-align:center;font-size:15px;color:#9a9a9a;letter-spacing:0.27px">Anwenden</div>
<div style="position:absolute;left:247px;top:604px;width:105px;height:26px;background:linear-gradient(#fbfbfb 0,#f0f0f0 45%,#dedede 55%,#e8e8e8 100%);border:1px solid #404040;border-radius:3px"></div>
<div style="position:absolute;left:247px;top:609px;width:105px;text-align:center;font-size:15px;color:#000;letter-spacing:0.27px">Abbrechen</div>
</body></html>
